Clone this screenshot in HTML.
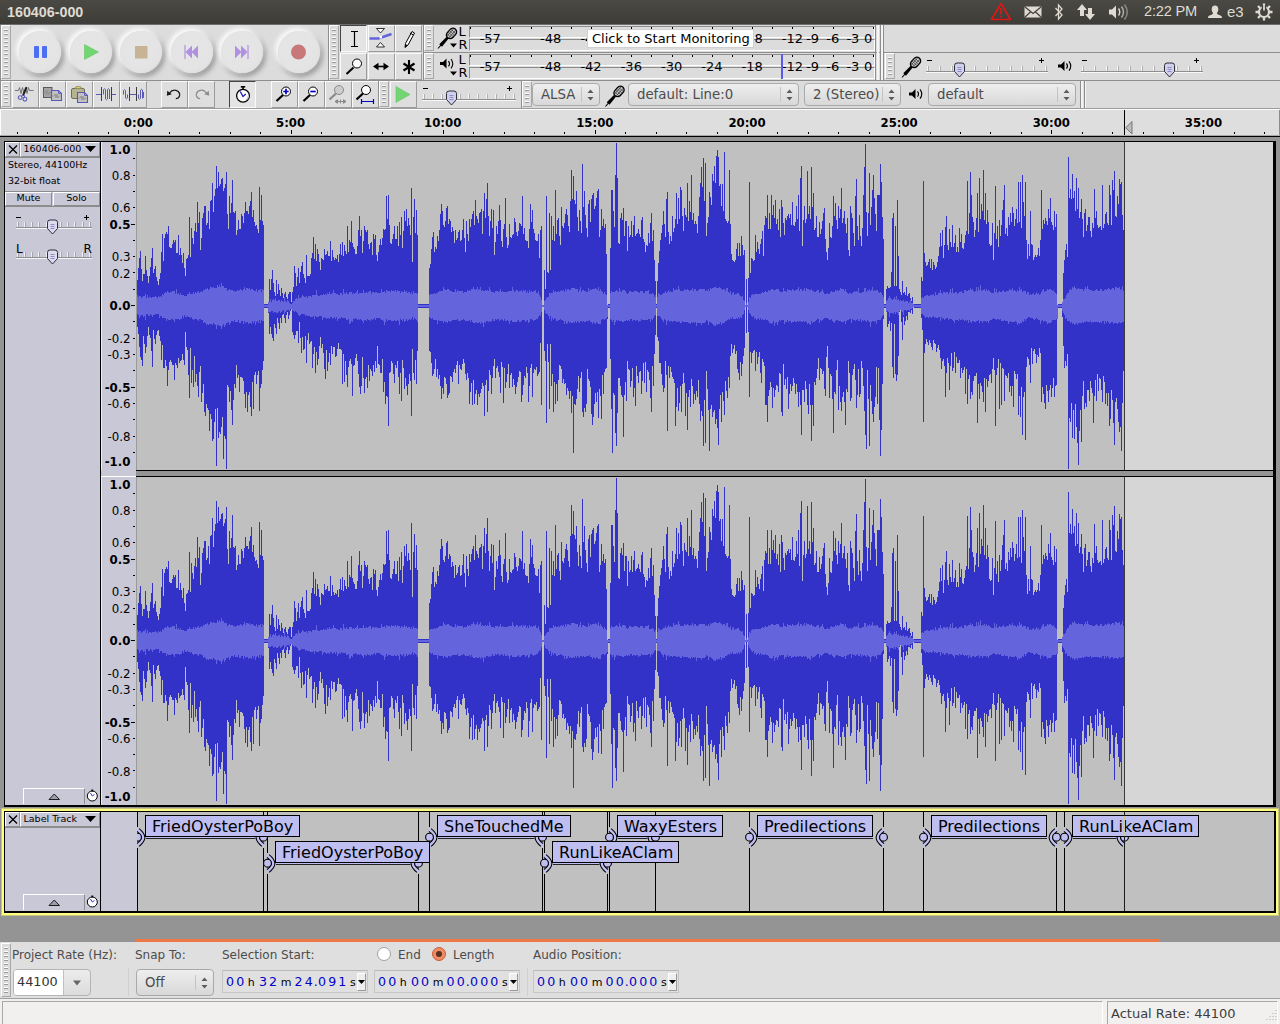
<!DOCTYPE html><html><head><meta charset="utf-8"><title>160406-000</title><style>
*{box-sizing:border-box;margin:0;padding:0}
html,body{width:1280px;height:1024px;overflow:hidden;background:#dcdcdc;font-family:"DejaVu Sans","Liberation Sans",sans-serif;color:#000}
.a{position:absolute}
.t{position:absolute;white-space:nowrap;line-height:1}
#top{left:0;top:0;width:1280px;height:24px;background:linear-gradient(#4a4944,#3d3c38)}
.tb{position:absolute;background:#dcdcdc}.ln{position:absolute;background:#8e8e8e}
.grab{position:absolute;width:10px;background:#dcdcdc;border:1px solid #a8a8a8;border-top-color:#fff;border-left-color:#fff}.grab:after{content:'';position:absolute;left:2px;width:4px;top:3px;bottom:2px;background:repeating-linear-gradient(#fdfdfd 0 1px,#9a9a9a 1px 2px,#dcdcdc 2px 4px)}
.btn{position:absolute;width:27px;height:27px;background:#dedede;border:1px solid #9c9c9c;border-top-color:#fbfbfb;border-left-color:#fbfbfb}
.btn.dn{border-color:#444 #fbfbfb #fbfbfb #444;background:#e4e4e4}
.rb{position:absolute;width:42px;height:42px;border-radius:50%;background:radial-gradient(circle at 46% 44%,#e6e6e6 0,#e4e4e4 60%,#dadada 100%);box-shadow:-2px -2px 4px 1px #fafafa,2px 3px 5px 1px #9c9c9c}
.combo{position:absolute;height:23px;border:1px solid #a9a9a9;border-radius:4px;background:linear-gradient(#eeeeee,#d8d8d8);font-size:13.300px;color:#4c4c4c;line-height:22px;padding-left:8px;white-space:nowrap;overflow:hidden}
.lbl{position:absolute;height:22px;background:#bebef0;border:1px solid #000;font-size:16px;line-height:20px;padding-top:1px;padding-left:6px;white-space:nowrap}
.sel{font-size:12px;color:#4c4c4c}
.dg{position:absolute;top:975px;width:10px;text-align:center;font-size:12.600px;line-height:13px;color:#0000c8}.un{position:absolute;top:975.500px;width:12px;text-align:center;font-size:11px;line-height:13px;color:#000}.tc{position:absolute;height:23px;background:#e4e4e4;border:1px solid #c4c4c4;font-size:15px;line-height:21px;white-space:nowrap;color:#000;padding-left:5px;letter-spacing:2.2px}
.tc b{font-weight:normal;color:#0000c0}
.tc i{font-style:normal;font-size:13px;letter-spacing:0;margin:0 3px 0 1px}
</style></head><body><div class="a" id="top"></div><div class="t" style="left:7px;top:4.500px;font-size:14.300px;font-weight:bold;color:#dfdbd2;font-family:'Liberation Sans','DejaVu Sans',sans-serif">160406-000</div><div class="t" style="left:1144px;top:4px;font-size:14.600px;letter-spacing:-0.2px;color:#dfdbd2;font-family:'Liberation Sans',sans-serif">2:22 PM</div><div class="t" style="left:1227px;top:4px;font-size:15px;color:#dfdbd2;font-family:'Liberation Sans',sans-serif">e3</div><svg class="a" style="left:980px;top:0" width="300" height="24" viewBox="980 0 300 24">
<path d="M1001 3.5L1010.5 19.5H991.5Z" fill="none" stroke="#e01616" stroke-width="1.6" stroke-linejoin="round"/>
<path d="M1001 8v6M1001 15.5v2" stroke="#e01616" stroke-width="1.8"/>
<rect x="1024.500" y="6.500" width="17" height="11" rx="1" fill="#dfdbd2"/>
<path d="M1025 7l8 6.500 8-6.500M1025 17l6-5.500M1041 17l-6-5.500" fill="none" stroke="#3d3c38" stroke-width="1.100"/>
<path d="M1055.500 8l6.500 7-3.500 4v-14l3.500 4-6.500 7" fill="none" stroke="#dfdbd2" stroke-width="1.300"/>
<path d="M1082 4l5 6h-3v6h-4v-6h-3zM1090 20l-5-6h3v-6h4v6h3z" fill="#dfdbd2"/>
<path d="M1109 9.500h3l4-4v13l-4-4h-3z" fill="#dfdbd2"/>
<path d="M1118.500 8.500q2.500 3.500 0 7" fill="none" stroke="#dfdbd2" stroke-width="1.400"/>
<path d="M1121.500 6.500q4 5.500 0 11" fill="none" stroke="#b5b2aa" stroke-width="1.400"/>
<path d="M1124.500 4.500q5.500 7.500 0 15" fill="none" stroke="#8f8c85" stroke-width="1.400"/>
<path d="M1215 5.500c2.200 0 3.300 1.700 3.300 3.800 0 1.600-.6 2.900-1.400 3.700 0 1.200 1.600 1.700 3.600 2.500 1.200.5 1.500 1.200 1.500 2.500h-14c0-1.300.3-2 1.500-2.500 2-.8 3.600-1.300 3.600-2.500-.8-.8-1.400-2.100-1.400-3.700 0-2.100 1.100-3.800 3.300-3.800z" fill="#dfdbd2"/>
<g transform="translate(1264 12)" fill="none" stroke="#dfdbd2"><circle r="5" stroke-width="2.200"/><path d="M0-8.500v3M0 8.500v-3M-8.500 0h3M8.500 0h-3M-6-6l2 2M6-6l-2 2M-6 6l2-2M6 6l-2-2" stroke-width="2.400"/><path d="M0-7v6" stroke="#3d3c38" stroke-width="4.500"/><path d="M0-7.500v6" stroke-width="1.800"/></g>
</svg><div class="tb" style="left:1px;top:24px;width:328px;height:56px"></div><div class="grab" style="left:1px;top:25px;height:54px"></div><div class="rb" style="left:19px;top:31px"></div><div class="rb" style="left:69.5px;top:31px"></div><div class="rb" style="left:120px;top:31px"></div><div class="rb" style="left:170.5px;top:31px"></div><div class="rb" style="left:220.5px;top:31px"></div><div class="rb" style="left:277.5px;top:31px"></div><svg class="a" style="left:0;top:24px" width="330" height="56" viewBox="0 24 330 56">
<rect x="34" y="46" width="5" height="12" rx="1" fill="#4c6ef0"/><rect x="42" y="46" width="5" height="12" rx="1" fill="#4c6ef0"/>
<path d="M84.500 44.500l14 7.500-14 7.500z" fill="#72d572" stroke="#66c466" stroke-width=".6"/>
<rect x="135" y="46" width="12.500" height="12.500" fill="#c8b494"/>
<path d="M185 45v14" stroke="#b090e0" stroke-width="1.200"/><path d="M192 45.500v13l-6.500-6.500zM198 45.500v13l-6.500-6.500z" fill="#b090e0"/>
<path d="M248 45v14" stroke="#b090e0" stroke-width="1.200"/><path d="M235 45.500v13l6.500-6.500zM241 45.500v13l6.500-6.500z" fill="#b090e0"/>
<circle cx="298.500" cy="52" r="7.500" fill="#c87878"/>
</svg><div class="tb" style="left:329px;top:24px;width:95px;height:56px"></div><div class="grab" style="left:329px;top:25px;height:54px"></div><div class="btn dn" style="left:340px;top:25px"></div><div class="btn" style="left:367.5px;top:25px"></div><div class="btn" style="left:395px;top:25px"></div><div class="btn" style="left:340px;top:52.5px"></div><div class="btn" style="left:367.5px;top:52.5px"></div><div class="btn" style="left:395px;top:52.5px"></div><svg class="a" style="left:340px;top:24px" width="84" height="56" viewBox="340 24 84 56">
<path d="M351 31.500h7M351 46.500h7M354.500 31.500v15" stroke="#000" stroke-width="1.200" fill="none"/>
<path d="M369.500 38.500h9l13-4.500" stroke="#6464dc" stroke-width="2.600" fill="none"/><path d="M376.500 28.500h8l-4 4.500zM376.500 47h8l-4-4.500z" fill="#fff" stroke="#000" stroke-width=".8"/><rect x="379.500" y="36" width="2.500" height="2.500" fill="#fff"/>
<path d="M412 31.500l2.500 1.500-6.500 12-3 2.500.5-4z" fill="#fff" stroke="#000" stroke-width="1"/><path d="M405 47.500l.5-3.500 2 1.200z" fill="#000"/><path d="M410 33l3 1.800" stroke="#000" stroke-width="1"/>
<circle cx="357" cy="63.500" r="4.500" fill="#fff" stroke="#000" stroke-width="1"/><path d="M353.500 67.500l-7 6.500" stroke="#000" stroke-width="2"/>
<path d="M375 66.500h12" stroke="#000" stroke-width="1.600"/><path d="M373 66.500l5.500-3.800v7.600zM389 66.500l-5.500-3.800v7.600z" fill="#000"/>
<path d="M409 60v14M403.500 63.500l11 7M414.500 63.500l-11 7" stroke="#000" stroke-width="2.100"/>
</svg><div class="tb" style="left:423px;top:24px;width:454px;height:28px"></div><div class="grab" style="left:424px;top:25px;height:26px"></div><div class="a" style="left:469px;top:26.0px;width:406px;height:12px;background:#dcdcdc;border:1px solid #fff;border-top-color:#8c8c8c;border-left-color:#8c8c8c"></div><div class="a" style="left:469px;top:38.5px;width:406px;height:12px;background:#dcdcdc;border:1px solid #fff;border-top-color:#8c8c8c;border-left-color:#8c8c8c"></div><div class="t" style="left:458.500px;top:25px;font-size:13px">L</div><div class="t" style="left:458.500px;top:38px;font-size:13px">R</div><div class="a" style="left:470px;top:27px;width:1px;height:2px;background:#000"></div><div class="a" style="left:490px;top:27px;width:1px;height:2px;background:#000"></div><div class="a" style="left:510px;top:27px;width:1px;height:2px;background:#000"></div><div class="a" style="left:531px;top:27px;width:1px;height:2px;background:#000"></div><div class="a" style="left:551px;top:27px;width:1px;height:2px;background:#000"></div><div class="a" style="left:571px;top:27px;width:1px;height:2px;background:#000"></div><div class="a" style="left:591px;top:27px;width:1px;height:2px;background:#000"></div><div class="a" style="left:611px;top:27px;width:1px;height:2px;background:#000"></div><div class="a" style="left:631px;top:27px;width:1px;height:2px;background:#000"></div><div class="a" style="left:651px;top:27px;width:1px;height:2px;background:#000"></div><div class="a" style="left:672px;top:27px;width:1px;height:2px;background:#000"></div><div class="a" style="left:692px;top:27px;width:1px;height:2px;background:#000"></div><div class="a" style="left:712px;top:27px;width:1px;height:2px;background:#000"></div><div class="a" style="left:732px;top:27px;width:1px;height:2px;background:#000"></div><div class="a" style="left:752px;top:27px;width:1px;height:2px;background:#000"></div><div class="a" style="left:772px;top:27px;width:1px;height:2px;background:#000"></div><div class="a" style="left:792px;top:27px;width:1px;height:2px;background:#000"></div><div class="a" style="left:813px;top:27px;width:1px;height:2px;background:#000"></div><div class="a" style="left:833px;top:27px;width:1px;height:2px;background:#000"></div><div class="a" style="left:853px;top:27px;width:1px;height:2px;background:#000"></div><div class="a" style="left:873px;top:27px;width:1px;height:2px;background:#000"></div><div class="tb" style="left:423px;top:52px;width:454px;height:28px"></div><div class="grab" style="left:424px;top:53px;height:26px"></div><div class="a" style="left:469px;top:54.0px;width:406px;height:12px;background:#dcdcdc;border:1px solid #fff;border-top-color:#8c8c8c;border-left-color:#8c8c8c"></div><div class="a" style="left:469px;top:66.5px;width:406px;height:12px;background:#dcdcdc;border:1px solid #fff;border-top-color:#8c8c8c;border-left-color:#8c8c8c"></div><div class="t" style="left:458.500px;top:53px;font-size:13px">L</div><div class="t" style="left:458.500px;top:66px;font-size:13px">R</div><div class="a" style="left:470px;top:55px;width:1px;height:2px;background:#000"></div><div class="a" style="left:490px;top:55px;width:1px;height:2px;background:#000"></div><div class="a" style="left:510px;top:55px;width:1px;height:2px;background:#000"></div><div class="a" style="left:531px;top:55px;width:1px;height:2px;background:#000"></div><div class="a" style="left:551px;top:55px;width:1px;height:2px;background:#000"></div><div class="a" style="left:571px;top:55px;width:1px;height:2px;background:#000"></div><div class="a" style="left:591px;top:55px;width:1px;height:2px;background:#000"></div><div class="a" style="left:611px;top:55px;width:1px;height:2px;background:#000"></div><div class="a" style="left:631px;top:55px;width:1px;height:2px;background:#000"></div><div class="a" style="left:651px;top:55px;width:1px;height:2px;background:#000"></div><div class="a" style="left:672px;top:55px;width:1px;height:2px;background:#000"></div><div class="a" style="left:692px;top:55px;width:1px;height:2px;background:#000"></div><div class="a" style="left:712px;top:55px;width:1px;height:2px;background:#000"></div><div class="a" style="left:732px;top:55px;width:1px;height:2px;background:#000"></div><div class="a" style="left:752px;top:55px;width:1px;height:2px;background:#000"></div><div class="a" style="left:772px;top:55px;width:1px;height:2px;background:#000"></div><div class="a" style="left:792px;top:55px;width:1px;height:2px;background:#000"></div><div class="a" style="left:813px;top:55px;width:1px;height:2px;background:#000"></div><div class="a" style="left:833px;top:55px;width:1px;height:2px;background:#000"></div><div class="a" style="left:853px;top:55px;width:1px;height:2px;background:#000"></div><div class="a" style="left:873px;top:55px;width:1px;height:2px;background:#000"></div><div class="t" style="left:460.29499999999996px;width:60px;text-align:center;top:32px;font-size:13px">-57</div><div class="t" style="left:520.73px;width:60px;text-align:center;top:32px;font-size:13px">-48</div><div class="t" style="left:561.02px;width:60px;text-align:center;top:32px;font-size:13px">-42</div><div class="t" style="left:762.47px;width:60px;text-align:center;top:32px;font-size:13px">-12</div><div class="t" style="left:782.615px;width:60px;text-align:center;top:32px;font-size:13px">-9</div><div class="t" style="left:802.76px;width:60px;text-align:center;top:32px;font-size:13px">-6</div><div class="t" style="left:822.905px;width:60px;text-align:center;top:32px;font-size:13px">-3</div><div class="t" style="left:460.29499999999996px;width:60px;text-align:center;top:60px;font-size:13px">-57</div><div class="t" style="left:520.73px;width:60px;text-align:center;top:60px;font-size:13px">-48</div><div class="t" style="left:561.02px;width:60px;text-align:center;top:60px;font-size:13px">-42</div><div class="t" style="left:601.31px;width:60px;text-align:center;top:60px;font-size:13px">-36</div><div class="t" style="left:641.5999999999999px;width:60px;text-align:center;top:60px;font-size:13px">-30</div><div class="t" style="left:681.89px;width:60px;text-align:center;top:60px;font-size:13px">-24</div><div class="t" style="left:722.18px;width:60px;text-align:center;top:60px;font-size:13px">-18</div><div class="t" style="left:762.47px;width:60px;text-align:center;top:60px;font-size:13px">-12</div><div class="t" style="left:782.615px;width:60px;text-align:center;top:60px;font-size:13px">-9</div><div class="t" style="left:802.76px;width:60px;text-align:center;top:60px;font-size:13px">-6</div><div class="t" style="left:822.905px;width:60px;text-align:center;top:60px;font-size:13px">-3</div><div class="t" style="left:864px;top:32px;font-size:13px">0</div><div class="t" style="left:864px;top:60px;font-size:13px">0</div><div class="t" style="left:754.500px;top:32px;font-size:13px">8</div><div class="a" style="left:587px;top:29px;width:167px;height:19px;background:#fff;border:1px solid #d0d0d0"></div><div class="t" style="left:592px;top:32px;font-size:13px">Click to Start Monitoring</div><div class="a" style="left:780.500px;top:54px;width:2px;height:25px;background:#5a5af0"></div><svg class="a" style="left:434px;top:24px" width="26" height="56" viewBox="434 24 26 56">
<g transform="translate(451.0 34.0) rotate(42)"><path d="M-1.300 5l-.5 10.500h3.600l-.5-10.500z" fill="#000"/><path d="M-.5 15v4.500h1v-4.500z" fill="#000"/><rect x="-3.700" y="-6.500" width="7.400" height="11.500" rx="3.600" fill="#c8c8c8" stroke="#000" stroke-width="1.300"/><path d="M-3.500 -3.500h7M-3.700 -1.500h7.400M-3.700 .5h7.400M-3.500 2.500h7M-1.500 -6v10.500M1 -6v10.500" stroke="#222" stroke-width=".6"/></g>
<path d="M450 43.500h7l-3.500 4z" fill="#000"/>
<path d="M440 62h3l3.500-3.500v10l-3.500-3.500h-3z" fill="#000"/><path d="M448.500 61q2 2.700 0 5.400M451 59q3.500 4.700 0 9.400" fill="none" stroke="#000" stroke-width="1.100"/>
<path d="M450 71.500h7l-3.500 4z" fill="#000"/>
</svg><div class="tb" style="left:884px;top:52px;width:397px;height:28px;border-right:none"></div><div class="grab" style="left:885px;top:53px;height:26px"></div><div class="a" style="left:926px;top:71px;width:122px;height:1px;background:#8e8e8e"></div><div class="a" style="left:926px;top:72px;width:122px;height:1px;background:#f8f8f8"></div><div class="a" style="left:927px;top:66px;width:1px;height:5px;background:#f6f6f6"></div><div class="a" style="left:928px;top:66px;width:1px;height:5px;background:#b0b0b0"></div><div class="a" style="left:939px;top:66px;width:1px;height:5px;background:#f6f6f6"></div><div class="a" style="left:940px;top:66px;width:1px;height:5px;background:#b0b0b0"></div><div class="a" style="left:951px;top:66px;width:1px;height:5px;background:#f6f6f6"></div><div class="a" style="left:952px;top:66px;width:1px;height:5px;background:#b0b0b0"></div><div class="a" style="left:962px;top:66px;width:1px;height:5px;background:#f6f6f6"></div><div class="a" style="left:963px;top:66px;width:1px;height:5px;background:#b0b0b0"></div><div class="a" style="left:974px;top:66px;width:1px;height:5px;background:#f6f6f6"></div><div class="a" style="left:975px;top:66px;width:1px;height:5px;background:#b0b0b0"></div><div class="a" style="left:986px;top:66px;width:1px;height:5px;background:#f6f6f6"></div><div class="a" style="left:987px;top:66px;width:1px;height:5px;background:#b0b0b0"></div><div class="a" style="left:998px;top:66px;width:1px;height:5px;background:#f6f6f6"></div><div class="a" style="left:999px;top:66px;width:1px;height:5px;background:#b0b0b0"></div><div class="a" style="left:1010px;top:66px;width:1px;height:5px;background:#f6f6f6"></div><div class="a" style="left:1011px;top:66px;width:1px;height:5px;background:#b0b0b0"></div><div class="a" style="left:1021px;top:66px;width:1px;height:5px;background:#f6f6f6"></div><div class="a" style="left:1022px;top:66px;width:1px;height:5px;background:#b0b0b0"></div><div class="a" style="left:1033px;top:66px;width:1px;height:5px;background:#f6f6f6"></div><div class="a" style="left:1034px;top:66px;width:1px;height:5px;background:#b0b0b0"></div><div class="a" style="left:1045px;top:66px;width:1px;height:5px;background:#f6f6f6"></div><div class="a" style="left:1046px;top:66px;width:1px;height:5px;background:#b0b0b0"></div><svg class="a" style="left:952.5px;top:62px" width="13" height="17" viewBox="0 0 13 17"><path d="M1.500 3.500q0-2.500 2.500-2.500h5q2.500 0 2.500 2.500v6l-5 5.500-5-5.500z" fill="#d0d0ea" stroke="#2c2c3c" stroke-width="1"/><path d="M4.500 5.500h4M4.500 7.500h4M4.500 9.500h4" stroke="#8c8cc8" stroke-width="1"/></svg><div class="a" style="left:927px;top:60px;width:5px;height:1px;background:#000"></div><div class="a" style="left:1039px;top:60px;width:5px;height:1px;background:#000"></div><div class="a" style="left:1041px;top:58px;width:1px;height:5px;background:#000"></div><div class="a" style="left:1081px;top:71px;width:122px;height:1px;background:#8e8e8e"></div><div class="a" style="left:1081px;top:72px;width:122px;height:1px;background:#f8f8f8"></div><div class="a" style="left:1082px;top:66px;width:1px;height:5px;background:#f6f6f6"></div><div class="a" style="left:1083px;top:66px;width:1px;height:5px;background:#b0b0b0"></div><div class="a" style="left:1094px;top:66px;width:1px;height:5px;background:#f6f6f6"></div><div class="a" style="left:1095px;top:66px;width:1px;height:5px;background:#b0b0b0"></div><div class="a" style="left:1106px;top:66px;width:1px;height:5px;background:#f6f6f6"></div><div class="a" style="left:1107px;top:66px;width:1px;height:5px;background:#b0b0b0"></div><div class="a" style="left:1117px;top:66px;width:1px;height:5px;background:#f6f6f6"></div><div class="a" style="left:1118px;top:66px;width:1px;height:5px;background:#b0b0b0"></div><div class="a" style="left:1129px;top:66px;width:1px;height:5px;background:#f6f6f6"></div><div class="a" style="left:1130px;top:66px;width:1px;height:5px;background:#b0b0b0"></div><div class="a" style="left:1141px;top:66px;width:1px;height:5px;background:#f6f6f6"></div><div class="a" style="left:1142px;top:66px;width:1px;height:5px;background:#b0b0b0"></div><div class="a" style="left:1153px;top:66px;width:1px;height:5px;background:#f6f6f6"></div><div class="a" style="left:1154px;top:66px;width:1px;height:5px;background:#b0b0b0"></div><div class="a" style="left:1165px;top:66px;width:1px;height:5px;background:#f6f6f6"></div><div class="a" style="left:1166px;top:66px;width:1px;height:5px;background:#b0b0b0"></div><div class="a" style="left:1176px;top:66px;width:1px;height:5px;background:#f6f6f6"></div><div class="a" style="left:1177px;top:66px;width:1px;height:5px;background:#b0b0b0"></div><div class="a" style="left:1188px;top:66px;width:1px;height:5px;background:#f6f6f6"></div><div class="a" style="left:1189px;top:66px;width:1px;height:5px;background:#b0b0b0"></div><div class="a" style="left:1200px;top:66px;width:1px;height:5px;background:#f6f6f6"></div><div class="a" style="left:1201px;top:66px;width:1px;height:5px;background:#b0b0b0"></div><svg class="a" style="left:1163.0px;top:62px" width="13" height="17" viewBox="0 0 13 17"><path d="M1.500 3.500q0-2.500 2.500-2.500h5q2.500 0 2.500 2.500v6l-5 5.500-5-5.500z" fill="#d0d0ea" stroke="#2c2c3c" stroke-width="1"/><path d="M4.500 5.500h4M4.500 7.500h4M4.500 9.500h4" stroke="#8c8cc8" stroke-width="1"/></svg><div class="a" style="left:1082px;top:60px;width:5px;height:1px;background:#000"></div><div class="a" style="left:1194px;top:60px;width:5px;height:1px;background:#000"></div><div class="a" style="left:1196px;top:58px;width:1px;height:5px;background:#000"></div><svg class="a" style="left:896px;top:54px" width="180" height="26" viewBox="896 54 180 26">
<g transform="translate(915.0 63.0) rotate(42)"><path d="M-1.300 5l-.5 10.500h3.600l-.5-10.500z" fill="#000"/><path d="M-.5 15v4.500h1v-4.500z" fill="#000"/><rect x="-3.700" y="-6.500" width="7.400" height="11.500" rx="3.600" fill="#c8c8c8" stroke="#000" stroke-width="1.300"/><path d="M-3.500 -3.500h7M-3.700 -1.500h7.400M-3.700 .5h7.400M-3.500 2.500h7M-1.500 -6v10.500M1 -6v10.500" stroke="#222" stroke-width=".6"/></g>
<path d="M1058 64.500h3l3.500-3.500v10l-3.500-3.500h-3z" fill="#000"/><path d="M1066.500 63.300q2 2.700 0 5.400M1069 61.300q3.500 4.700 0 9.400" fill="none" stroke="#000" stroke-width="1.100"/>
</svg><div class="tb" style="left:1px;top:80px;width:379px;height:28px"></div><div class="grab" style="left:1px;top:81px;height:26px"></div><div class="btn" style="left:11.5px;top:81px"></div><div class="btn" style="left:38.5px;top:81px"></div><div class="btn" style="left:65.5px;top:81px"></div><div class="btn" style="left:92.5px;top:81px"></div><div class="btn" style="left:119.5px;top:81px"></div><div class="btn" style="left:161px;top:81px"></div><div class="btn" style="left:188px;top:81px"></div><div class="btn dn" style="left:229px;top:81px"></div><div class="btn" style="left:271px;top:81px"></div><div class="btn" style="left:298px;top:81px"></div><div class="btn" style="left:325px;top:81px"></div><div class="btn" style="left:352px;top:81px"></div><svg class="a" style="left:0;top:80px" width="380" height="28" viewBox="0 80 380 28">
<path d="M15 90.500H18.500L19.500 87.500L21 93.500L22.500 87.500L24 93.500L25.500 87.500L27 93.500L28.500 87.500L29.500 90.500H33.500" stroke="#6a6a6a" stroke-width=".9" fill="none"/><path d="M26.600 87.200L23 95.500" stroke="#1c1c1c" stroke-width="1.900"/><path d="M23.200 94.500L21.300 96.200M24 95L24.600 97.200" stroke="#5a5ab4" stroke-width="1"/><circle cx="20.200" cy="97.600" r="1.900" fill="none" stroke="#5a5ab4" stroke-width="1.100"/><circle cx="24.900" cy="99.200" r="1.900" fill="none" stroke="#5a5ab4" stroke-width="1.100"/>
<rect x="43.500" y="87.500" width="8.500" height="10" fill="#a4a4a4" stroke="#5a5a5a" stroke-width="1"/><path d="M42.500 92.500h2l1-2 1 4 1-4 1 4 1-2h1.500" stroke="#8a8a8a" stroke-width=".8" fill="none"/><path d="M51.500 90.500H58.500L61.500 93.500V100.500H51.500Z" fill="#c2c2c2" stroke="#5a5ab4" stroke-width="1.100"/><path d="M58.500 90.500V93.500H61.500" fill="none" stroke="#5a5ab4" stroke-width=".9"/><path d="M52.500 96h1.500l1-2 1 4 1-4 1 4 1-2h1.500" stroke="#8a8a8a" stroke-width=".8" fill="none"/>
<rect x="71.500" y="88.500" width="13" height="10" rx="1.500" fill="#b6b48e" stroke="#6e6e5e" stroke-width="1"/><path d="M75 88.500q0-2 2-2h2.500q2 0 2 2z" fill="#d8cc6c" stroke="#8a8860" stroke-width=".8"/><path d="M77.500 92.500H84.500L87.500 95.500V102.500H77.500Z" fill="#c2c2c2" stroke="#5a5ab4" stroke-width="1.100"/><path d="M84.500 92.500V95.500H87.500" fill="none" stroke="#5a5ab4" stroke-width=".9"/><path d="M78.500 98h1.500l1-2 1 4 1-4 1 4 1-2h1.500" stroke="#8a8a8a" stroke-width=".8" fill="none"/>
<g shape-rendering="crispEdges" fill="none"><path d="M96 94.500H101M112 94.500H116" stroke="#5a5ab4" stroke-width="1"/><path d="M101.500 87V101M111.500 87V101" stroke="#3c3c3c" stroke-width="1"/></g><path d="M103.500 94.500V89.500Q104.500 88 105.500 89.500V99Q106.500 100.500 107.500 99V89.500Q108.500 88 109.500 89.500V99" stroke="#5a5ab4" stroke-width="1" fill="none"/>
<g shape-rendering="crispEdges" fill="none"><path d="M130 94.500H137" stroke="#5a5ab4" stroke-width="1"/><path d="M129.500 87V101M136.500 87V101" stroke="#3c3c3c" stroke-width="1"/></g><path d="M123.500 94.500V90.500Q124.500 89 125.500 90.500V98Q126.500 99.500 127.500 98V94.500M138.500 94.500V98.500Q139.500 100 140.500 98.500V90Q141.500 88.500 142.500 90V98Q143 99 143.500 97.500V92" stroke="#5a5ab4" stroke-width="1" fill="none"/>
<path d="M166.800 95.800L167.300 90.800L171.800 94.200Z" fill="#1c1c1c"/><path d="M169.500 93Q172 89.300 176 90.300Q180.500 92 179.500 96Q178.500 98.700 175.800 98.600" stroke="#1c1c1c" stroke-width="1.300" fill="none"/>
<path d="M209.200 95.800L208.700 90.800L204.200 94.200Z" fill="#8c8c8c"/><path d="M206.500 93Q204 89.300 200 90.300Q195.500 92 196.500 96Q197.500 98.700 200.200 98.600" stroke="#8c8c8c" stroke-width="1.300" fill="none"/>
<circle cx="243" cy="95.700" r="6.400" fill="#fff" stroke="#000" stroke-width="1.300"/><path d="M246 100q2.500-2 2.500-4.500" stroke="#c8c8c8" stroke-width="1.500" fill="none"/><path d="M240.800 86.800h4.400" stroke="#000" stroke-width="1.600"/><path d="M243 87v2.500" stroke="#000" stroke-width="1.600"/><path d="M240.300 91.500L243 96.500L245.800 94" stroke="#1818c0" stroke-width="1.300" fill="none"/>
<circle cx="286" cy="91.500" r="4.500" fill="#fff" stroke="#000" stroke-width="1"/><path d="M283 95l-6.500 6" stroke="#000" stroke-width="2.200"/><path d="M283.300 91.500h5.400M286 88.800v5.400" stroke="#0000c0" stroke-width="1.700"/>
<circle cx="313" cy="91.500" r="4.500" fill="#fff" stroke="#000" stroke-width="1"/><path d="M310 95l-6.500 6" stroke="#000" stroke-width="2.200"/><path d="M310.300 91.500h5.400" stroke="#0000c0" stroke-width="1.700"/>
<circle cx="339" cy="90" r="4.500" fill="#cdcdcd" stroke="#8a8a8a" stroke-width="1"/><path d="M336 93.500l-6.500 6" stroke="#8a8a8a" stroke-width="2.200"/><path d="M335 101.500h11M335 101.500l2.500-1.800v3.600zM346 101.500l-2.500-1.800v3.600zM340.500 99.500v4" stroke="#8a8a8a" stroke-width="1" fill="#8a8a8a"/>
<circle cx="366" cy="90" r="4.500" fill="#fff" stroke="#000" stroke-width="1"/><path d="M363 93.500l-6.500 6" stroke="#000" stroke-width="2.200"/><path d="M361.500 101.500h12M361.500 99v5M373.500 99v5" stroke="#0000c0" stroke-width="1.200" fill="none"/>
</svg><div class="tb" style="left:379px;top:80px;width:143px;height:28px"></div><div class="grab" style="left:379px;top:81px;height:26px"></div><div class="btn" style="left:389.500px;top:81px"></div><svg class="a" style="left:389px;top:81px" width="28" height="27" viewBox="0 0 28 27"><path d="M7 5.500l14 8-14 8z" fill="#72d572" stroke="#66c466" stroke-width=".6"/></svg><div class="a" style="left:422px;top:99px;width:94px;height:1px;background:#8e8e8e"></div><div class="a" style="left:422px;top:100px;width:94px;height:1px;background:#f8f8f8"></div><div class="a" style="left:423px;top:94px;width:1px;height:5px;background:#f6f6f6"></div><div class="a" style="left:424px;top:94px;width:1px;height:5px;background:#b0b0b0"></div><div class="a" style="left:432px;top:94px;width:1px;height:5px;background:#f6f6f6"></div><div class="a" style="left:433px;top:94px;width:1px;height:5px;background:#b0b0b0"></div><div class="a" style="left:441px;top:94px;width:1px;height:5px;background:#f6f6f6"></div><div class="a" style="left:442px;top:94px;width:1px;height:5px;background:#b0b0b0"></div><div class="a" style="left:450px;top:94px;width:1px;height:5px;background:#f6f6f6"></div><div class="a" style="left:451px;top:94px;width:1px;height:5px;background:#b0b0b0"></div><div class="a" style="left:459px;top:94px;width:1px;height:5px;background:#f6f6f6"></div><div class="a" style="left:460px;top:94px;width:1px;height:5px;background:#b0b0b0"></div><div class="a" style="left:468px;top:94px;width:1px;height:5px;background:#f6f6f6"></div><div class="a" style="left:469px;top:94px;width:1px;height:5px;background:#b0b0b0"></div><div class="a" style="left:477px;top:94px;width:1px;height:5px;background:#f6f6f6"></div><div class="a" style="left:478px;top:94px;width:1px;height:5px;background:#b0b0b0"></div><div class="a" style="left:486px;top:94px;width:1px;height:5px;background:#f6f6f6"></div><div class="a" style="left:487px;top:94px;width:1px;height:5px;background:#b0b0b0"></div><div class="a" style="left:495px;top:94px;width:1px;height:5px;background:#f6f6f6"></div><div class="a" style="left:496px;top:94px;width:1px;height:5px;background:#b0b0b0"></div><div class="a" style="left:504px;top:94px;width:1px;height:5px;background:#f6f6f6"></div><div class="a" style="left:505px;top:94px;width:1px;height:5px;background:#b0b0b0"></div><div class="a" style="left:513px;top:94px;width:1px;height:5px;background:#f6f6f6"></div><div class="a" style="left:514px;top:94px;width:1px;height:5px;background:#b0b0b0"></div><svg class="a" style="left:444.5px;top:90px" width="13" height="17" viewBox="0 0 13 17"><path d="M1.500 3.500q0-2.500 2.500-2.500h5q2.500 0 2.500 2.500v6l-5 5.500-5-5.500z" fill="#d0d0ea" stroke="#2c2c3c" stroke-width="1"/><path d="M4.500 5.500h4M4.500 7.500h4M4.500 9.500h4" stroke="#8c8cc8" stroke-width="1"/></svg><div class="a" style="left:423px;top:88px;width:5px;height:1px;background:#000"></div><div class="a" style="left:507px;top:88px;width:5px;height:1px;background:#000"></div><div class="a" style="left:509px;top:86px;width:1px;height:5px;background:#000"></div><div class="tb" style="left:522px;top:80px;width:559px;height:28px"></div><div class="grab" style="left:522px;top:81px;height:26px"></div><div class="combo" style="left:532px;top:83px;width:68px;height:23px;line-height:22px">ALSA</div><div class="a" style="left:581px;top:87.0px;width:1px;height:15px;background:#c4c4c4"></div><svg class="a" style="left:586px;top:88.0px" width="9" height="14" viewBox="0 0 9 14"><path d="M1.500 5l3-3.500 3 3.500zM1.500 9l3 3.500 3-3.500z" fill="#5a5a5a"/></svg><div class="combo" style="left:628px;top:83px;width:171px;height:23px;line-height:22px">default: Line:0</div><div class="a" style="left:780px;top:87.0px;width:1px;height:15px;background:#c4c4c4"></div><svg class="a" style="left:785px;top:88.0px" width="9" height="14" viewBox="0 0 9 14"><path d="M1.500 5l3-3.500 3 3.500zM1.500 9l3 3.500 3-3.500z" fill="#5a5a5a"/></svg><div class="combo" style="left:804px;top:83px;width:97px;height:23px;line-height:22px">2 (Stereo)</div><div class="a" style="left:882px;top:87.0px;width:1px;height:15px;background:#c4c4c4"></div><svg class="a" style="left:887px;top:88.0px" width="9" height="14" viewBox="0 0 9 14"><path d="M1.500 5l3-3.500 3 3.500zM1.500 9l3 3.500 3-3.500z" fill="#5a5a5a"/></svg><div class="combo" style="left:928px;top:83px;width:148px;height:23px;line-height:22px">default</div><div class="a" style="left:1057px;top:87.0px;width:1px;height:15px;background:#c4c4c4"></div><svg class="a" style="left:1062px;top:88.0px" width="9" height="14" viewBox="0 0 9 14"><path d="M1.500 5l3-3.500 3 3.500zM1.500 9l3 3.500 3-3.500z" fill="#5a5a5a"/></svg><svg class="a" style="left:604px;top:81px" width="320" height="27" viewBox="604 81 320 27">
<g transform="translate(618.5 92.0) rotate(42)"><path d="M-1.300 5l-.5 10.500h3.600l-.5-10.500z" fill="#000"/><path d="M-.5 15v4.500h1v-4.500z" fill="#000"/><rect x="-3.700" y="-6.500" width="7.400" height="11.500" rx="3.600" fill="#c8c8c8" stroke="#000" stroke-width="1.300"/><path d="M-3.500 -3.500h7M-3.700 -1.500h7.400M-3.700 .5h7.400M-3.500 2.500h7M-1.500 -6v10.500M1 -6v10.500" stroke="#222" stroke-width=".6"/></g>
<path d="M909 92.500h3l3.500-3.500v10l-3.500-3.500h-3z" fill="#000"/><path d="M917.500 91.300q2 2.700 0 5.400M920 89.300q3.500 4.700 0 9.400" fill="none" stroke="#000" stroke-width="1.100"/>
</svg><div class="ln" style="left:0px;top:24px;width:1280px;height:1px;background:#6e6d6a"></div><div class="ln" style="left:423px;top:52px;width:857px;height:1px;background:#8e8e8e"></div><div class="ln" style="left:0px;top:80px;width:1280px;height:1px;background:#8e8e8e"></div><div class="ln" style="left:0px;top:25px;width:1px;height:83px;background:#8e8e8e"></div><div class="ln" style="left:328px;top:25px;width:1px;height:55px;background:#8e8e8e"></div><div class="ln" style="left:423px;top:25px;width:1px;height:55px;background:#8e8e8e"></div><div class="ln" style="left:875px;top:25px;width:1px;height:55px;background:#8e8e8e"></div><div class="ln" style="left:880px;top:25px;width:1px;height:55px;background:#8e8e8e"></div><div class="ln" style="left:883px;top:25px;width:1px;height:55px;background:#8e8e8e"></div><div class="ln" style="left:877px;top:25px;width:1px;height:55px;background:#f4f4f4"></div><div class="ln" style="left:878px;top:25px;width:1px;height:55px;background:#f4f4f4"></div><div class="ln" style="left:881px;top:25px;width:1px;height:55px;background:#f4f4f4"></div><div class="ln" style="left:882px;top:25px;width:1px;height:55px;background:#f4f4f4"></div><div class="ln" style="left:378px;top:81px;width:1px;height:27px;background:#8e8e8e"></div><div class="ln" style="left:521px;top:81px;width:1px;height:27px;background:#8e8e8e"></div><div class="ln" style="left:1080px;top:81px;width:1px;height:27px;background:#8e8e8e"></div><div class="ln" style="left:1084px;top:81px;width:1px;height:27px;background:#8e8e8e"></div><div class="ln" style="left:1081px;top:81px;width:1px;height:27px;background:#f4f4f4"></div><div class="ln" style="left:1082px;top:81px;width:1px;height:27px;background:#f4f4f4"></div><div class="ln" style="left:1085px;top:81px;width:1px;height:27px;background:#f4f4f4"></div><div class="a" style="left:0;top:108px;width:1280px;height:1px;background:#9c9c9c"></div><div class="a" style="left:0;top:109px;width:1280px;height:1px;background:#fdfdfd"></div><div class="a" style="left:1px;top:110px;width:1278px;height:25px;background:#dedede"></div><div class="a" style="left:0;top:135px;width:1280px;height:1px;background:#a8a8a8"></div><div class="a" style="left:0;top:136px;width:1280px;height:1px;background:#000"></div><div class="a" style="left:0;top:110px;width:1px;height:25px;background:#fdfdfd"></div><div class="a" style="left:1279px;top:110px;width:1px;height:25px;background:#8c8c8c"></div><div class="a" style="left:17px;top:132px;width:1px;height:2px;background:#000"></div><div class="a" style="left:47px;top:132px;width:1px;height:2px;background:#000"></div><div class="a" style="left:78px;top:132px;width:1px;height:2px;background:#000"></div><div class="a" style="left:108px;top:132px;width:1px;height:2px;background:#000"></div><div class="a" style="left:138px;top:130px;width:1px;height:4px;background:#000"></div><div class="a" style="left:169px;top:132px;width:1px;height:2px;background:#000"></div><div class="a" style="left:199px;top:132px;width:1px;height:2px;background:#000"></div><div class="a" style="left:230px;top:132px;width:1px;height:2px;background:#000"></div><div class="a" style="left:260px;top:132px;width:1px;height:2px;background:#000"></div><div class="a" style="left:291px;top:130px;width:1px;height:4px;background:#000"></div><div class="a" style="left:321px;top:132px;width:1px;height:2px;background:#000"></div><div class="a" style="left:351px;top:132px;width:1px;height:2px;background:#000"></div><div class="a" style="left:382px;top:132px;width:1px;height:2px;background:#000"></div><div class="a" style="left:412px;top:132px;width:1px;height:2px;background:#000"></div><div class="a" style="left:443px;top:130px;width:1px;height:4px;background:#000"></div><div class="a" style="left:473px;top:132px;width:1px;height:2px;background:#000"></div><div class="a" style="left:504px;top:132px;width:1px;height:2px;background:#000"></div><div class="a" style="left:534px;top:132px;width:1px;height:2px;background:#000"></div><div class="a" style="left:564px;top:132px;width:1px;height:2px;background:#000"></div><div class="a" style="left:595px;top:130px;width:1px;height:4px;background:#000"></div><div class="a" style="left:625px;top:132px;width:1px;height:2px;background:#000"></div><div class="a" style="left:656px;top:132px;width:1px;height:2px;background:#000"></div><div class="a" style="left:686px;top:132px;width:1px;height:2px;background:#000"></div><div class="a" style="left:717px;top:132px;width:1px;height:2px;background:#000"></div><div class="a" style="left:747px;top:130px;width:1px;height:4px;background:#000"></div><div class="a" style="left:777px;top:132px;width:1px;height:2px;background:#000"></div><div class="a" style="left:808px;top:132px;width:1px;height:2px;background:#000"></div><div class="a" style="left:838px;top:132px;width:1px;height:2px;background:#000"></div><div class="a" style="left:869px;top:132px;width:1px;height:2px;background:#000"></div><div class="a" style="left:899px;top:130px;width:1px;height:4px;background:#000"></div><div class="a" style="left:930px;top:132px;width:1px;height:2px;background:#000"></div><div class="a" style="left:960px;top:132px;width:1px;height:2px;background:#000"></div><div class="a" style="left:990px;top:132px;width:1px;height:2px;background:#000"></div><div class="a" style="left:1021px;top:132px;width:1px;height:2px;background:#000"></div><div class="a" style="left:1051px;top:130px;width:1px;height:4px;background:#000"></div><div class="a" style="left:1082px;top:132px;width:1px;height:2px;background:#000"></div><div class="a" style="left:1112px;top:132px;width:1px;height:2px;background:#000"></div><div class="a" style="left:1143px;top:132px;width:1px;height:2px;background:#000"></div><div class="a" style="left:1173px;top:132px;width:1px;height:2px;background:#000"></div><div class="a" style="left:1203px;top:130px;width:1px;height:4px;background:#000"></div><div class="a" style="left:1234px;top:132px;width:1px;height:2px;background:#000"></div><div class="a" style="left:1264px;top:132px;width:1px;height:2px;background:#000"></div><div class="t" style="left:108.4px;width:60px;text-align:center;top:118px;font-size:11.700px;font-weight:bold">0:00</div><div class="t" style="left:260.55px;width:60px;text-align:center;top:118px;font-size:11.700px;font-weight:bold">5:00</div><div class="t" style="left:412.70000000000005px;width:60px;text-align:center;top:118px;font-size:11.700px;font-weight:bold">10:00</div><div class="t" style="left:564.85px;width:60px;text-align:center;top:118px;font-size:11.700px;font-weight:bold">15:00</div><div class="t" style="left:717.0px;width:60px;text-align:center;top:118px;font-size:11.700px;font-weight:bold">20:00</div><div class="t" style="left:869.15px;width:60px;text-align:center;top:118px;font-size:11.700px;font-weight:bold">25:00</div><div class="t" style="left:1021.3px;width:60px;text-align:center;top:118px;font-size:11.700px;font-weight:bold">30:00</div><div class="t" style="left:1173.45px;width:60px;text-align:center;top:118px;font-size:11.700px;font-weight:bold">35:00</div><div class="a" style="left:1124px;top:110px;width:1px;height:25px;background:#000"></div><svg class="a" style="left:1125px;top:120px" width="9" height="15" viewBox="0 0 9 15"><path d="M7 1.500v12.500l-6.300-6.250z" fill="#bcbcbc" stroke="#767676" stroke-width="1"/></svg><div class="a" style="left:0;top:137px;width:1280px;height:805px;background:#949494"></div><div class="a" style="left:4px;top:141px;width:1272px;height:666px;background:#000"></div><div class="a" style="left:5px;top:142px;width:95px;height:663px;background:#c8c8d7"></div><div class="a" style="left:101px;top:142px;width:35px;height:663px;background:#c8c8d7"></div><div class="a" style="left:136px;top:142px;width:1px;height:663px;background:#9a9a9a"></div><div class="a" style="left:101px;top:142px;width:1px;height:663px;background:#ececf4"></div><div class="a" style="left:101px;top:812px;width:1px;height:99px;background:#ececf4"></div><div class="a" style="left:137px;top:142px;width:988px;height:328px;background:#c0c0c0"></div><div class="a" style="left:1125px;top:142px;width:148px;height:328px;background:#d6d6d6"></div><div class="a" style="left:137px;top:477px;width:988px;height:328px;background:#c0c0c0"></div><div class="a" style="left:1125px;top:477px;width:148px;height:328px;background:#d6d6d6"></div><div class="a" style="left:101px;top:470px;width:1172px;height:7px;background:#949494"></div><div class="a" style="left:136px;top:470px;width:1137px;height:1px;background:#000"></div><div class="a" style="left:136px;top:476px;width:1137px;height:1px;background:#000"></div><div class="a" style="left:101px;top:470px;width:35px;height:6px;background:#c8c8d7"></div><div class="a" style="left:101px;top:476px;width:35px;height:1px;background:#fff"></div><svg class="a" style="left:0;top:0" width="1280" height="1024" viewBox="0 0 1280 1024" shape-rendering="crispEdges"><path d="M137.5 280V327M138.5 268V334M139.5 258V347M140.5 251V357M141.5 269V360M142.5 281V366M143.5 274V336M144.5 274V344M145.5 256V353M146.5 270V347M147.5 276V336M148.5 283V327M149.5 276V335M150.5 267V338M151.5 258V351M152.5 248V367M153.5 273V330M154.5 269V339M155.5 266V344M156.5 277V335M157.5 281V331M158.5 285V330M159.5 279V336M160.5 273V341M161.5 252V360M162.5 234V345M163.5 261V368M164.5 238V368M165.5 234V360M166.5 232V366M167.5 234V386M168.5 226V370M169.5 247V362M170.5 248V360M171.5 248V362M172.5 244V365M173.5 240V365M174.5 242V380M175.5 240V363M176.5 253V365M177.5 253V368M178.5 235V358M179.5 255V363M180.5 248V361M181.5 255V360M182.5 263V354M183.5 253V360M184.5 268V365M185.5 276V332M186.5 259V347M187.5 258V350M188.5 255V375M189.5 217V398M190.5 257V348M191.5 228V383M192.5 238V370M193.5 244V387M194.5 231V356M195.5 223V382M196.5 232V374M197.5 202V386M198.5 223V397M199.5 212V372M200.5 250V366M201.5 238V402M202.5 218V393M203.5 213V384M204.5 206V412M205.5 206V416M206.5 225V404M207.5 223V408M208.5 211V410M209.5 229V431M210.5 201V414M211.5 200V419M212.5 183V441M213.5 212V439M214.5 196V422M215.5 189V409M216.5 166V466M217.5 188V408M218.5 172V438M219.5 186V432M220.5 184V434M221.5 179V427M222.5 178V417M223.5 191V459M224.5 188V436M225.5 184V439M226.5 172V469M227.5 214V385M228.5 229V387M229.5 196V402M230.5 213V391M231.5 203V410M232.5 180V425M233.5 212V400M234.5 213V384M235.5 211V388M236.5 235V365M237.5 230V378M238.5 220V375M239.5 229V392M240.5 229V377M241.5 214V377M242.5 216V378M243.5 223V381M244.5 213V394M245.5 202V408M246.5 211V392M247.5 211V412M248.5 214V395M249.5 206V392M250.5 201V407M251.5 192V416M252.5 217V382M253.5 210V409M254.5 222V375M255.5 226V372M256.5 225V384M257.5 229V375M258.5 233V371M259.5 187V411M260.5 220V388M261.5 195V384M262.5 221V370M263.5 225V361M264.5 304V308M265.5 304V308M266.5 304V308M267.5 304V308M268.5 302V313M269.5 279V334M270.5 290V327M271.5 279V334M272.5 270V338M273.5 283V341M274.5 292V324M275.5 296V328M276.5 280V334M277.5 294V318M278.5 284V323M279.5 290V329M280.5 296V318M281.5 288V323M282.5 293V315M283.5 298V314M284.5 294V318M285.5 292V323M286.5 297V315M287.5 299V312M288.5 294V319M289.5 292V315M290.5 292V311M291.5 302V309M292.5 292V332M293.5 287V335M294.5 266V339M295.5 273V335M296.5 286V331M297.5 277V331M298.5 268V343M299.5 283V322M300.5 272V338M301.5 266V353M302.5 262V337M303.5 274V350M304.5 278V349M305.5 283V336M306.5 255V363M307.5 276V340M308.5 276V333M309.5 276V344M310.5 274V342M311.5 258V341M312.5 253V368M313.5 237V354M314.5 259V347M315.5 244V373M316.5 261V352M317.5 249V365M318.5 254V359M319.5 262V346M320.5 270V337M321.5 258V348M322.5 259V344M323.5 260V353M324.5 249V369M325.5 255V379M326.5 254V350M327.5 251V371M328.5 256V362M329.5 256V353M330.5 241V365M331.5 261V346M332.5 250V354M333.5 257V347M334.5 260V347M335.5 258V357M336.5 259V356M337.5 255V349M338.5 262V343M339.5 254V349M340.5 244V349M341.5 255V350M342.5 242V384M343.5 256V354M344.5 245V382M345.5 251V361M346.5 254V375M347.5 226V387M348.5 252V367M349.5 240V361M350.5 242V359M351.5 221V364M352.5 243V396M353.5 247V366M354.5 249V365M355.5 254V358M356.5 254V354M357.5 246V361M358.5 230V374M359.5 216V387M360.5 236V394M361.5 230V386M362.5 253V357M363.5 241V378M364.5 226V393M365.5 230V379M366.5 232V377M367.5 230V388M368.5 244V365M369.5 249V381M370.5 243V369M371.5 242V371M372.5 255V376M373.5 234V365M374.5 239V372M375.5 235V361M376.5 255V368M377.5 261V346M378.5 252V364M379.5 245V365M380.5 239V373M381.5 245V373M382.5 238V359M383.5 229V392M384.5 230V382M385.5 229V404M386.5 196V396M387.5 219V397M388.5 195V426M389.5 225V373M390.5 243V372M391.5 244V361M392.5 239V363M393.5 234V374M394.5 226V383M395.5 239V365M396.5 239V368M397.5 226V361M398.5 246V377M399.5 222V394M400.5 235V373M401.5 217V401M402.5 248V360M403.5 231V368M404.5 211V389M405.5 221V378M406.5 209V386M407.5 226V395M408.5 218V384M409.5 225V374M410.5 235V381M411.5 188V416M412.5 262V349M413.5 217V373M414.5 199V380M415.5 233V360M416.5 210V384M417.5 235V351M418.5 304V308M419.5 304V308M420.5 304V308M421.5 304V308M422.5 304V308M423.5 304V308M424.5 304V308M425.5 304V308M426.5 304V308M427.5 304V308M428.5 304V308M429.5 268V351M430.5 264V352M431.5 249V363M432.5 237V376M433.5 232V374M434.5 252V369M435.5 247V359M436.5 249V377M437.5 236V369M438.5 241V379M439.5 230V375M440.5 214V386M441.5 204V399M442.5 211V388M443.5 225V394M444.5 227V377M445.5 221V378M446.5 208V384M447.5 206V398M448.5 224V395M449.5 219V393M450.5 221V376M451.5 232V377M452.5 227V382M453.5 231V372M454.5 243V369M455.5 230V373M456.5 240V365M457.5 238V361M458.5 232V384M459.5 230V365M460.5 241V369M461.5 240V370M462.5 230V364M463.5 219V359M464.5 238V363M465.5 252V374M466.5 221V380M467.5 234V373M468.5 241V378M469.5 219V404M470.5 227V392M471.5 219V383M472.5 214V405M473.5 211V380M474.5 225V404M475.5 200V394M476.5 216V390M477.5 219V405M478.5 223V394M479.5 213V397M480.5 212V393M481.5 209V389M482.5 234V383M483.5 211V386M484.5 193V416M485.5 218V385M486.5 199V380M487.5 183V412M488.5 216V391M489.5 236V370M490.5 221V375M491.5 209V394M492.5 228V378M493.5 210V366M494.5 255V359M495.5 242V378M496.5 226V368M497.5 234V366M498.5 221V372M499.5 205V377M500.5 220V393M501.5 241V362M502.5 247V367M503.5 229V403M504.5 224V368M505.5 198V388M506.5 237V382M507.5 248V374M508.5 245V364M509.5 224V388M510.5 237V375M511.5 238V373M512.5 235V387M513.5 234V379M514.5 218V385M515.5 222V394M516.5 232V387M517.5 236V382M518.5 231V377M519.5 223V371M520.5 224V372M521.5 226V402M522.5 196V395M523.5 234V385M524.5 228V376M525.5 240V378M526.5 241V367M527.5 241V373M528.5 248V402M529.5 229V386M530.5 204V368M531.5 222V364M532.5 210V397M533.5 229V373M534.5 233V369M535.5 240V370M536.5 241V367M537.5 241V376M538.5 234V374M539.5 258V372M540.5 230V343M541.5 226V405M542.5 305V307M543.5 305V307M544.5 270V351M545.5 289V361M546.5 196V423M547.5 272V344M548.5 273V362M549.5 213V409M550.5 270V344M551.5 216V386M552.5 240V374M553.5 226V412M554.5 241V382M555.5 190V404M556.5 234V384M557.5 220V401M558.5 218V380M559.5 236V365M560.5 245V366M561.5 207V369M562.5 226V383M563.5 228V379M564.5 223V384M565.5 214V383M566.5 209V395M567.5 215V388M568.5 226V391M569.5 232V399M570.5 201V391M571.5 170V413M572.5 199V396M573.5 176V453M574.5 200V404M575.5 204V405M576.5 191V399M577.5 217V389M578.5 231V376M579.5 210V392M580.5 221V378M581.5 233V372M582.5 164V412M583.5 207V417M584.5 191V408M585.5 215V412M586.5 228V404M587.5 237V369M588.5 204V379M589.5 200V381M590.5 222V387M591.5 199V414M592.5 195V425M593.5 193V417M594.5 209V404M595.5 206V393M596.5 198V402M597.5 191V392M598.5 189V418M599.5 237V389M600.5 230V396M601.5 209V419M602.5 226V375M603.5 219V394M604.5 228V372M605.5 224V369M606.5 254V368M607.5 305V319M608.5 304V308M609.5 304V308M610.5 248V359M611.5 190V409M612.5 190V453M613.5 211V393M614.5 227V395M615.5 175V433M616.5 143V446M617.5 178V413M618.5 243V378M619.5 244V378M620.5 218V386M621.5 213V395M622.5 220V397M623.5 208V437M624.5 236V395M625.5 221V382M626.5 221V401M627.5 251V361M628.5 226V369M629.5 237V370M630.5 235V387M631.5 221V381M632.5 237V368M633.5 225V397M634.5 216V388M635.5 236V406M636.5 234V366M637.5 233V376M638.5 229V383M639.5 234V372M640.5 237V371M641.5 220V394M642.5 217V381M643.5 239V363M644.5 242V383M645.5 252V362M646.5 245V392M647.5 246V370M648.5 233V372M649.5 243V380M650.5 223V398M651.5 213V412M652.5 241V366M653.5 230V386M654.5 260V354M655.5 281V335M656.5 304V308M657.5 281V337M658.5 263V341M659.5 251V363M660.5 240V363M661.5 233V374M662.5 225V385M663.5 211V392M664.5 224V388M665.5 237V361M666.5 199V375M667.5 192V431M668.5 232V366M669.5 244V378M670.5 236V367M671.5 241V372M672.5 216V377M673.5 232V379M674.5 228V383M675.5 219V426M676.5 193V407M677.5 224V388M678.5 198V411M679.5 219V403M680.5 187V386M681.5 190V412M682.5 216V384M683.5 231V373M684.5 208V383M685.5 215V416M686.5 217V393M687.5 183V430M688.5 221V397M689.5 201V390M690.5 212V407M691.5 175V379M692.5 220V386M693.5 213V404M694.5 224V394M695.5 221V400M696.5 224V391M697.5 233V397M698.5 216V380M699.5 197V404M700.5 183V421M701.5 167V411M702.5 187V416M703.5 158V446M704.5 201V400M705.5 163V443M706.5 236V371M707.5 223V389M708.5 217V410M709.5 192V451M710.5 197V409M711.5 205V405M712.5 174V417M713.5 181V412M714.5 166V410M715.5 183V424M716.5 156V419M717.5 150V428M718.5 157V445M719.5 186V409M720.5 184V395M721.5 206V422M722.5 184V392M723.5 211V401M724.5 152V415M725.5 219V381M726.5 221V391M727.5 223V398M728.5 221V377M729.5 170V388M730.5 224V356M731.5 254V344M732.5 260V353M733.5 261V349M734.5 262V345M735.5 260V354M736.5 249V351M737.5 243V369M738.5 256V373M739.5 243V380M740.5 256V362M741.5 236V376M742.5 245V364M743.5 255V356M744.5 250V348M745.5 305V307M746.5 279V333M747.5 305V307M748.5 278V332M749.5 182V397M750.5 273V352M751.5 258V363M752.5 259V353M753.5 261V351M754.5 260V350M755.5 235V371M756.5 252V352M757.5 242V364M758.5 249V357M759.5 254V352M760.5 244V373M761.5 239V383M762.5 231V359M763.5 256V362M764.5 225V366M765.5 216V405M766.5 218V405M767.5 195V422M768.5 229V396M769.5 213V390M770.5 229V382M771.5 195V387M772.5 215V408M773.5 205V388M774.5 218V397M775.5 200V390M776.5 224V385M777.5 219V386M778.5 230V392M779.5 209V373M780.5 237V374M781.5 200V412M782.5 207V416M783.5 223V364M784.5 235V385M785.5 218V379M786.5 220V389M787.5 216V377M788.5 214V409M789.5 218V394M790.5 214V384M791.5 225V391M792.5 202V386M793.5 225V378M794.5 226V383M795.5 222V394M796.5 206V384M797.5 219V392M798.5 195V407M799.5 231V392M800.5 178V405M801.5 166V435M802.5 246V390M803.5 220V390M804.5 206V402M805.5 223V381M806.5 219V389M807.5 171V405M808.5 214V414M809.5 206V384M810.5 219V405M811.5 167V441M812.5 207V405M813.5 193V426M814.5 230V382M815.5 228V385M816.5 216V378M817.5 237V369M818.5 237V358M819.5 222V380M820.5 234V368M821.5 229V369M822.5 221V374M823.5 213V371M824.5 208V389M825.5 239V396M826.5 252V357M827.5 260V346M828.5 248V368M829.5 223V398M830.5 237V374M831.5 238V376M832.5 226V399M833.5 196V433M834.5 216V392M835.5 203V394M836.5 220V370M837.5 229V360M838.5 206V410M839.5 218V386M840.5 209V402M841.5 188V411M842.5 223V397M843.5 218V392M844.5 211V402M845.5 224V425M846.5 233V389M847.5 218V392M848.5 250V361M849.5 256V373M850.5 206V401M851.5 213V398M852.5 218V375M853.5 233V369M854.5 246V364M855.5 196V380M856.5 179V408M857.5 226V395M858.5 240V369M859.5 215V397M860.5 236V394M861.5 246V361M862.5 228V368M863.5 195V386M864.5 167V411M865.5 144V435M866.5 212V449M867.5 236V370M868.5 213V399M869.5 173V446M870.5 225V385M871.5 207V401M872.5 190V414M873.5 175V422M874.5 198V407M875.5 214V397M876.5 231V367M877.5 195V404M878.5 195V368M879.5 195V420M880.5 164V456M881.5 182V430M882.5 217V384M883.5 239V319M884.5 304V308M885.5 304V308M886.5 289V312M887.5 286V327M888.5 288V324M889.5 288V321M890.5 287V331M891.5 272V323M892.5 218V367M893.5 213V378M894.5 286V324M895.5 226V374M896.5 286V381M897.5 200V375M898.5 256V356M899.5 289V312M900.5 292V310M901.5 295V322M902.5 281V340M903.5 293V317M904.5 292V325M905.5 295V321M906.5 287V316M907.5 296V320M908.5 294V312M909.5 293V312M910.5 298V313M911.5 301V310M912.5 297V314M913.5 304V307M914.5 304V308M915.5 304V308M916.5 304V308M917.5 304V308M918.5 304V308M919.5 304V308M920.5 304V308M921.5 277V318M922.5 281V330M923.5 181V422M924.5 253V353M925.5 262V344M926.5 266V339M927.5 265V342M928.5 262V345M929.5 259V340M930.5 268V343M931.5 259V347M932.5 270V350M933.5 262V340M934.5 265V343M935.5 269V344M936.5 267V352M937.5 262V348M938.5 256V345M939.5 247V350M940.5 233V358M941.5 246V369M942.5 230V361M943.5 258V359M944.5 245V366M945.5 227V397M946.5 216V373M947.5 245V358M948.5 250V363M949.5 229V390M950.5 242V366M951.5 247V353M952.5 225V371M953.5 247V368M954.5 243V352M955.5 235V373M956.5 252V357M957.5 247V363M958.5 252V363M959.5 228V360M960.5 242V378M961.5 234V368M962.5 248V373M963.5 249V370M964.5 243V367M965.5 235V394M966.5 231V369M967.5 181V404M968.5 234V379M969.5 213V375M970.5 172V399M971.5 195V392M972.5 217V395M973.5 222V381M974.5 237V376M975.5 230V376M976.5 218V373M977.5 193V423M978.5 232V384M979.5 178V399M980.5 219V383M981.5 204V386M982.5 211V392M983.5 170V402M984.5 220V378M985.5 193V412M986.5 224V379M987.5 210V387M988.5 222V381M989.5 244V375M990.5 246V374M991.5 245V383M992.5 223V369M993.5 260V358M994.5 233V370M995.5 186V426M996.5 239V375M997.5 226V368M998.5 247V359M999.5 220V409M1000.5 236V363M1001.5 225V405M1002.5 210V368M1003.5 200V369M1004.5 185V401M1005.5 234V375M1006.5 228V376M1007.5 236V378M1008.5 217V373M1009.5 225V392M1010.5 213V386M1011.5 222V396M1012.5 207V386M1013.5 213V407M1014.5 226V371M1015.5 219V374M1016.5 209V379M1017.5 223V374M1018.5 182V415M1019.5 222V396M1020.5 182V417M1021.5 228V387M1022.5 175V435M1023.5 202V397M1024.5 216V392M1025.5 182V440M1026.5 240V367M1027.5 259V357M1028.5 244V359M1029.5 256V365M1030.5 211V383M1031.5 244V348M1032.5 245V364M1033.5 260V351M1034.5 257V349M1035.5 255V354M1036.5 257V363M1037.5 255V355M1038.5 248V357M1039.5 256V348M1040.5 240V353M1041.5 190V402M1042.5 229V387M1043.5 220V394M1044.5 224V403M1045.5 218V409M1046.5 221V385M1047.5 225V391M1048.5 209V402M1049.5 218V390M1050.5 198V385M1051.5 222V397M1052.5 225V388M1053.5 230V378M1054.5 211V397M1055.5 227V386M1056.5 214V385M1057.5 305V319M1058.5 304V308M1059.5 304V308M1060.5 304V308M1061.5 304V308M1062.5 302V317M1063.5 273V346M1064.5 260V368M1065.5 250V361M1066.5 244V366M1067.5 257V354M1068.5 157V469M1069.5 198V418M1070.5 189V422M1071.5 199V403M1072.5 174V438M1073.5 198V410M1074.5 191V439M1075.5 211V404M1076.5 178V427M1077.5 209V443M1078.5 188V465M1079.5 218V431M1080.5 212V410M1081.5 199V442M1082.5 219V396M1083.5 237V381M1084.5 213V409M1085.5 209V403M1086.5 231V407M1087.5 225V390M1088.5 217V390M1089.5 217V401M1090.5 231V381M1091.5 237V388M1092.5 223V393M1093.5 228V423M1094.5 189V396M1095.5 218V380M1096.5 211V401M1097.5 225V374M1098.5 228V391M1099.5 227V378M1100.5 226V379M1101.5 230V390M1102.5 185V402M1103.5 228V376M1104.5 224V382M1105.5 214V404M1106.5 212V393M1107.5 223V406M1108.5 225V393M1109.5 185V426M1110.5 195V419M1111.5 225V390M1112.5 180V400M1113.5 190V423M1114.5 171V445M1115.5 216V402M1116.5 217V398M1117.5 196V409M1118.5 204V422M1119.5 179V432M1120.5 184V427M1121.5 182V451M1122.5 215V403M1123.5 230V371M1124.5 230V373M137.5 615V662M138.5 603V669M139.5 593V682M140.5 586V692M141.5 604V695M142.5 616V701M143.5 609V671M144.5 609V679M145.5 591V688M146.5 605V682M147.5 611V671M148.5 618V662M149.5 611V670M150.5 602V673M151.5 593V686M152.5 583V702M153.5 608V665M154.5 604V674M155.5 601V679M156.5 612V670M157.5 616V666M158.5 620V665M159.5 614V671M160.5 608V676M161.5 587V695M162.5 569V680M163.5 596V703M164.5 573V703M165.5 569V695M166.5 567V701M167.5 569V721M168.5 561V705M169.5 582V697M170.5 583V695M171.5 583V697M172.5 579V700M173.5 575V700M174.5 577V715M175.5 575V698M176.5 588V700M177.5 588V703M178.5 570V693M179.5 590V698M180.5 583V696M181.5 590V695M182.5 598V689M183.5 588V695M184.5 603V700M185.5 611V667M186.5 594V682M187.5 593V685M188.5 590V710M189.5 552V733M190.5 592V683M191.5 563V718M192.5 573V705M193.5 579V722M194.5 566V691M195.5 558V717M196.5 567V709M197.5 537V721M198.5 558V732M199.5 547V707M200.5 585V701M201.5 573V737M202.5 553V728M203.5 548V719M204.5 541V747M205.5 541V751M206.5 560V739M207.5 558V743M208.5 546V745M209.5 564V766M210.5 536V749M211.5 535V754M212.5 518V776M213.5 547V774M214.5 531V757M215.5 524V744M216.5 501V801M217.5 523V743M218.5 507V773M219.5 521V767M220.5 519V769M221.5 514V762M222.5 513V752M223.5 526V794M224.5 523V771M225.5 519V774M226.5 507V804M227.5 549V720M228.5 564V722M229.5 531V737M230.5 548V726M231.5 538V745M232.5 515V760M233.5 547V735M234.5 548V719M235.5 546V723M236.5 570V700M237.5 565V713M238.5 555V710M239.5 564V727M240.5 564V712M241.5 549V712M242.5 551V713M243.5 558V716M244.5 548V729M245.5 537V743M246.5 546V727M247.5 546V747M248.5 549V730M249.5 541V727M250.5 536V742M251.5 527V751M252.5 552V717M253.5 545V744M254.5 557V710M255.5 561V707M256.5 560V719M257.5 564V710M258.5 568V706M259.5 522V746M260.5 555V723M261.5 530V719M262.5 556V705M263.5 560V696M264.5 639V643M265.5 639V643M266.5 639V643M267.5 639V643M268.5 637V648M269.5 614V669M270.5 625V662M271.5 614V669M272.5 605V673M273.5 618V676M274.5 627V659M275.5 631V663M276.5 615V669M277.5 629V653M278.5 619V658M279.5 625V664M280.5 631V653M281.5 623V658M282.5 628V650M283.5 633V649M284.5 629V653M285.5 627V658M286.5 632V650M287.5 634V647M288.5 629V654M289.5 627V650M290.5 627V646M291.5 637V644M292.5 627V667M293.5 622V670M294.5 601V674M295.5 608V670M296.5 621V666M297.5 612V666M298.5 603V678M299.5 618V657M300.5 607V673M301.5 601V688M302.5 597V672M303.5 609V685M304.5 613V684M305.5 618V671M306.5 590V698M307.5 611V675M308.5 611V668M309.5 611V679M310.5 609V677M311.5 593V676M312.5 588V703M313.5 572V689M314.5 594V682M315.5 579V708M316.5 596V687M317.5 584V700M318.5 589V694M319.5 597V681M320.5 605V672M321.5 593V683M322.5 594V679M323.5 595V688M324.5 584V704M325.5 590V714M326.5 589V685M327.5 586V706M328.5 591V697M329.5 591V688M330.5 576V700M331.5 596V681M332.5 585V689M333.5 592V682M334.5 595V682M335.5 593V692M336.5 594V691M337.5 590V684M338.5 597V678M339.5 589V684M340.5 579V684M341.5 590V685M342.5 577V719M343.5 591V689M344.5 580V717M345.5 586V696M346.5 589V710M347.5 561V722M348.5 587V702M349.5 575V696M350.5 577V694M351.5 556V699M352.5 578V731M353.5 582V701M354.5 584V700M355.5 589V693M356.5 589V689M357.5 581V696M358.5 565V709M359.5 551V722M360.5 571V729M361.5 565V721M362.5 588V692M363.5 576V713M364.5 561V728M365.5 565V714M366.5 567V712M367.5 565V723M368.5 579V700M369.5 584V716M370.5 578V704M371.5 577V706M372.5 590V711M373.5 569V700M374.5 574V707M375.5 570V696M376.5 590V703M377.5 596V681M378.5 587V699M379.5 580V700M380.5 574V708M381.5 580V708M382.5 573V694M383.5 564V727M384.5 565V717M385.5 564V739M386.5 531V731M387.5 554V732M388.5 530V761M389.5 560V708M390.5 578V707M391.5 579V696M392.5 574V698M393.5 569V709M394.5 561V718M395.5 574V700M396.5 574V703M397.5 561V696M398.5 581V712M399.5 557V729M400.5 570V708M401.5 552V736M402.5 583V695M403.5 566V703M404.5 546V724M405.5 556V713M406.5 544V721M407.5 561V730M408.5 553V719M409.5 560V709M410.5 570V716M411.5 523V751M412.5 597V684M413.5 552V708M414.5 534V715M415.5 568V695M416.5 545V719M417.5 570V686M418.5 639V643M419.5 639V643M420.5 639V643M421.5 639V643M422.5 639V643M423.5 639V643M424.5 639V643M425.5 639V643M426.5 639V643M427.5 639V643M428.5 639V643M429.5 603V686M430.5 599V687M431.5 584V698M432.5 572V711M433.5 567V709M434.5 587V704M435.5 582V694M436.5 584V712M437.5 571V704M438.5 576V714M439.5 565V710M440.5 549V721M441.5 539V734M442.5 546V723M443.5 560V729M444.5 562V712M445.5 556V713M446.5 543V719M447.5 541V733M448.5 559V730M449.5 554V728M450.5 556V711M451.5 567V712M452.5 562V717M453.5 566V707M454.5 578V704M455.5 565V708M456.5 575V700M457.5 573V696M458.5 567V719M459.5 565V700M460.5 576V704M461.5 575V705M462.5 565V699M463.5 554V694M464.5 573V698M465.5 587V709M466.5 556V715M467.5 569V708M468.5 576V713M469.5 554V739M470.5 562V727M471.5 554V718M472.5 549V740M473.5 546V715M474.5 560V739M475.5 535V729M476.5 551V725M477.5 554V740M478.5 558V729M479.5 548V732M480.5 547V728M481.5 544V724M482.5 569V718M483.5 546V721M484.5 528V751M485.5 553V720M486.5 534V715M487.5 518V747M488.5 551V726M489.5 571V705M490.5 556V710M491.5 544V729M492.5 563V713M493.5 545V701M494.5 590V694M495.5 577V713M496.5 561V703M497.5 569V701M498.5 556V707M499.5 540V712M500.5 555V728M501.5 576V697M502.5 582V702M503.5 564V738M504.5 559V703M505.5 533V723M506.5 572V717M507.5 583V709M508.5 580V699M509.5 559V723M510.5 572V710M511.5 573V708M512.5 570V722M513.5 569V714M514.5 553V720M515.5 557V729M516.5 567V722M517.5 571V717M518.5 566V712M519.5 558V706M520.5 559V707M521.5 561V737M522.5 531V730M523.5 569V720M524.5 563V711M525.5 575V713M526.5 576V702M527.5 576V708M528.5 583V737M529.5 564V721M530.5 539V703M531.5 557V699M532.5 545V732M533.5 564V708M534.5 568V704M535.5 575V705M536.5 576V702M537.5 576V711M538.5 569V709M539.5 593V707M540.5 565V678M541.5 561V740M542.5 640V642M543.5 640V642M544.5 605V686M545.5 624V696M546.5 531V758M547.5 607V679M548.5 608V697M549.5 548V744M550.5 605V679M551.5 551V721M552.5 575V709M553.5 561V747M554.5 576V717M555.5 525V739M556.5 569V719M557.5 555V736M558.5 553V715M559.5 571V700M560.5 580V701M561.5 542V704M562.5 561V718M563.5 563V714M564.5 558V719M565.5 549V718M566.5 544V730M567.5 550V723M568.5 561V726M569.5 567V734M570.5 536V726M571.5 505V748M572.5 534V731M573.5 511V788M574.5 535V739M575.5 539V740M576.5 526V734M577.5 552V724M578.5 566V711M579.5 545V727M580.5 556V713M581.5 568V707M582.5 499V747M583.5 542V752M584.5 526V743M585.5 550V747M586.5 563V739M587.5 572V704M588.5 539V714M589.5 535V716M590.5 557V722M591.5 534V749M592.5 530V760M593.5 528V752M594.5 544V739M595.5 541V728M596.5 533V737M597.5 526V727M598.5 524V753M599.5 572V724M600.5 565V731M601.5 544V754M602.5 561V710M603.5 554V729M604.5 563V707M605.5 559V704M606.5 589V703M607.5 640V654M608.5 639V643M609.5 639V643M610.5 583V694M611.5 525V744M612.5 525V788M613.5 546V728M614.5 562V730M615.5 510V768M616.5 478V781M617.5 513V748M618.5 578V713M619.5 579V713M620.5 553V721M621.5 548V730M622.5 555V732M623.5 543V772M624.5 571V730M625.5 556V717M626.5 556V736M627.5 586V696M628.5 561V704M629.5 572V705M630.5 570V722M631.5 556V716M632.5 572V703M633.5 560V732M634.5 551V723M635.5 571V741M636.5 569V701M637.5 568V711M638.5 564V718M639.5 569V707M640.5 572V706M641.5 555V729M642.5 552V716M643.5 574V698M644.5 577V718M645.5 587V697M646.5 580V727M647.5 581V705M648.5 568V707M649.5 578V715M650.5 558V733M651.5 548V747M652.5 576V701M653.5 565V721M654.5 595V689M655.5 616V670M656.5 639V643M657.5 616V672M658.5 598V676M659.5 586V698M660.5 575V698M661.5 568V709M662.5 560V720M663.5 546V727M664.5 559V723M665.5 572V696M666.5 534V710M667.5 527V766M668.5 567V701M669.5 579V713M670.5 571V702M671.5 576V707M672.5 551V712M673.5 567V714M674.5 563V718M675.5 554V761M676.5 528V742M677.5 559V723M678.5 533V746M679.5 554V738M680.5 522V721M681.5 525V747M682.5 551V719M683.5 566V708M684.5 543V718M685.5 550V751M686.5 552V728M687.5 518V765M688.5 556V732M689.5 536V725M690.5 547V742M691.5 510V714M692.5 555V721M693.5 548V739M694.5 559V729M695.5 556V735M696.5 559V726M697.5 568V732M698.5 551V715M699.5 532V739M700.5 518V756M701.5 502V746M702.5 522V751M703.5 493V781M704.5 536V735M705.5 498V778M706.5 571V706M707.5 558V724M708.5 552V745M709.5 527V786M710.5 532V744M711.5 540V740M712.5 509V752M713.5 516V747M714.5 501V745M715.5 518V759M716.5 491V754M717.5 485V763M718.5 492V780M719.5 521V744M720.5 519V730M721.5 541V757M722.5 519V727M723.5 546V736M724.5 487V750M725.5 554V716M726.5 556V726M727.5 558V733M728.5 556V712M729.5 505V723M730.5 559V691M731.5 589V679M732.5 595V688M733.5 596V684M734.5 597V680M735.5 595V689M736.5 584V686M737.5 578V704M738.5 591V708M739.5 578V715M740.5 591V697M741.5 571V711M742.5 580V699M743.5 590V691M744.5 585V683M745.5 640V642M746.5 614V668M747.5 640V642M748.5 613V667M749.5 517V732M750.5 608V687M751.5 593V698M752.5 594V688M753.5 596V686M754.5 595V685M755.5 570V706M756.5 587V687M757.5 577V699M758.5 584V692M759.5 589V687M760.5 579V708M761.5 574V718M762.5 566V694M763.5 591V697M764.5 560V701M765.5 551V740M766.5 553V740M767.5 530V757M768.5 564V731M769.5 548V725M770.5 564V717M771.5 530V722M772.5 550V743M773.5 540V723M774.5 553V732M775.5 535V725M776.5 559V720M777.5 554V721M778.5 565V727M779.5 544V708M780.5 572V709M781.5 535V747M782.5 542V751M783.5 558V699M784.5 570V720M785.5 553V714M786.5 555V724M787.5 551V712M788.5 549V744M789.5 553V729M790.5 549V719M791.5 560V726M792.5 537V721M793.5 560V713M794.5 561V718M795.5 557V729M796.5 541V719M797.5 554V727M798.5 530V742M799.5 566V727M800.5 513V740M801.5 501V770M802.5 581V725M803.5 555V725M804.5 541V737M805.5 558V716M806.5 554V724M807.5 506V740M808.5 549V749M809.5 541V719M810.5 554V740M811.5 502V776M812.5 542V740M813.5 528V761M814.5 565V717M815.5 563V720M816.5 551V713M817.5 572V704M818.5 572V693M819.5 557V715M820.5 569V703M821.5 564V704M822.5 556V709M823.5 548V706M824.5 543V724M825.5 574V731M826.5 587V692M827.5 595V681M828.5 583V703M829.5 558V733M830.5 572V709M831.5 573V711M832.5 561V734M833.5 531V768M834.5 551V727M835.5 538V729M836.5 555V705M837.5 564V695M838.5 541V745M839.5 553V721M840.5 544V737M841.5 523V746M842.5 558V732M843.5 553V727M844.5 546V737M845.5 559V760M846.5 568V724M847.5 553V727M848.5 585V696M849.5 591V708M850.5 541V736M851.5 548V733M852.5 553V710M853.5 568V704M854.5 581V699M855.5 531V715M856.5 514V743M857.5 561V730M858.5 575V704M859.5 550V732M860.5 571V729M861.5 581V696M862.5 563V703M863.5 530V721M864.5 502V746M865.5 479V770M866.5 547V784M867.5 571V705M868.5 548V734M869.5 508V781M870.5 560V720M871.5 542V736M872.5 525V749M873.5 510V757M874.5 533V742M875.5 549V732M876.5 566V702M877.5 530V739M878.5 530V703M879.5 530V755M880.5 499V791M881.5 517V765M882.5 552V719M883.5 574V654M884.5 639V643M885.5 639V643M886.5 624V647M887.5 621V662M888.5 623V659M889.5 623V656M890.5 622V666M891.5 607V658M892.5 553V702M893.5 548V713M894.5 621V659M895.5 561V709M896.5 621V716M897.5 535V710M898.5 591V691M899.5 624V647M900.5 627V645M901.5 630V657M902.5 616V675M903.5 628V652M904.5 627V660M905.5 630V656M906.5 622V651M907.5 631V655M908.5 629V647M909.5 628V647M910.5 633V648M911.5 636V645M912.5 632V649M913.5 639V642M914.5 639V643M915.5 639V643M916.5 639V643M917.5 639V643M918.5 639V643M919.5 639V643M920.5 639V643M921.5 612V653M922.5 616V665M923.5 516V757M924.5 588V688M925.5 597V679M926.5 601V674M927.5 600V677M928.5 597V680M929.5 594V675M930.5 603V678M931.5 594V682M932.5 605V685M933.5 597V675M934.5 600V678M935.5 604V679M936.5 602V687M937.5 597V683M938.5 591V680M939.5 582V685M940.5 568V693M941.5 581V704M942.5 565V696M943.5 593V694M944.5 580V701M945.5 562V732M946.5 551V708M947.5 580V693M948.5 585V698M949.5 564V725M950.5 577V701M951.5 582V688M952.5 560V706M953.5 582V703M954.5 578V687M955.5 570V708M956.5 587V692M957.5 582V698M958.5 587V698M959.5 563V695M960.5 577V713M961.5 569V703M962.5 583V708M963.5 584V705M964.5 578V702M965.5 570V729M966.5 566V704M967.5 516V739M968.5 569V714M969.5 548V710M970.5 507V734M971.5 530V727M972.5 552V730M973.5 557V716M974.5 572V711M975.5 565V711M976.5 553V708M977.5 528V758M978.5 567V719M979.5 513V734M980.5 554V718M981.5 539V721M982.5 546V727M983.5 505V737M984.5 555V713M985.5 528V747M986.5 559V714M987.5 545V722M988.5 557V716M989.5 579V710M990.5 581V709M991.5 580V718M992.5 558V704M993.5 595V693M994.5 568V705M995.5 521V761M996.5 574V710M997.5 561V703M998.5 582V694M999.5 555V744M1000.5 571V698M1001.5 560V740M1002.5 545V703M1003.5 535V704M1004.5 520V736M1005.5 569V710M1006.5 563V711M1007.5 571V713M1008.5 552V708M1009.5 560V727M1010.5 548V721M1011.5 557V731M1012.5 542V721M1013.5 548V742M1014.5 561V706M1015.5 554V709M1016.5 544V714M1017.5 558V709M1018.5 517V750M1019.5 557V731M1020.5 517V752M1021.5 563V722M1022.5 510V770M1023.5 537V732M1024.5 551V727M1025.5 517V775M1026.5 575V702M1027.5 594V692M1028.5 579V694M1029.5 591V700M1030.5 546V718M1031.5 579V683M1032.5 580V699M1033.5 595V686M1034.5 592V684M1035.5 590V689M1036.5 592V698M1037.5 590V690M1038.5 583V692M1039.5 591V683M1040.5 575V688M1041.5 525V737M1042.5 564V722M1043.5 555V729M1044.5 559V738M1045.5 553V744M1046.5 556V720M1047.5 560V726M1048.5 544V737M1049.5 553V725M1050.5 533V720M1051.5 557V732M1052.5 560V723M1053.5 565V713M1054.5 546V732M1055.5 562V721M1056.5 549V720M1057.5 640V654M1058.5 639V643M1059.5 639V643M1060.5 639V643M1061.5 639V643M1062.5 637V652M1063.5 608V681M1064.5 595V703M1065.5 585V696M1066.5 579V701M1067.5 592V689M1068.5 492V804M1069.5 533V753M1070.5 524V757M1071.5 534V738M1072.5 509V773M1073.5 533V745M1074.5 526V774M1075.5 546V739M1076.5 513V762M1077.5 544V778M1078.5 523V800M1079.5 553V766M1080.5 547V745M1081.5 534V777M1082.5 554V731M1083.5 572V716M1084.5 548V744M1085.5 544V738M1086.5 566V742M1087.5 560V725M1088.5 552V725M1089.5 552V736M1090.5 566V716M1091.5 572V723M1092.5 558V728M1093.5 563V758M1094.5 524V731M1095.5 553V715M1096.5 546V736M1097.5 560V709M1098.5 563V726M1099.5 562V713M1100.5 561V714M1101.5 565V725M1102.5 520V737M1103.5 563V711M1104.5 559V717M1105.5 549V739M1106.5 547V728M1107.5 558V741M1108.5 560V728M1109.5 520V761M1110.5 530V754M1111.5 560V725M1112.5 515V735M1113.5 525V758M1114.5 506V780M1115.5 551V737M1116.5 552V733M1117.5 531V744M1118.5 539V757M1119.5 514V767M1120.5 519V762M1121.5 517V786M1122.5 550V738M1123.5 565V706M1124.5 565V708" stroke="#3232c8" stroke-width="1" fill="none"/><path d="M137.5 295V314M138.5 297V315M139.5 296V318M140.5 296V316M141.5 298V315M142.5 297V315M143.5 296V317M144.5 296V316M145.5 294V320M146.5 298V314M147.5 295V314M148.5 298V316M149.5 297V316M150.5 297V314M151.5 298V315M152.5 297V317M153.5 297V315M154.5 297V315M155.5 296V314M156.5 297V314M157.5 298V314M158.5 296V314M159.5 297V318M160.5 296V316M161.5 297V316M162.5 294V318M163.5 295V318M164.5 293V318M165.5 292V318M166.5 293V321M167.5 291V319M168.5 292V320M169.5 293V320M170.5 292V320M171.5 292V319M172.5 291V319M173.5 291V320M174.5 291V322M175.5 294V319M176.5 289V319M177.5 294V319M178.5 293V319M179.5 295V320M180.5 293V319M181.5 295V319M182.5 295V316M183.5 295V318M184.5 296V315M185.5 296V317M186.5 296V317M187.5 294V316M188.5 294V317M189.5 292V317M190.5 294V318M191.5 294V317M192.5 294V319M193.5 292V320M194.5 294V319M195.5 292V319M196.5 293V319M197.5 292V320M198.5 291V321M199.5 293V319M200.5 292V319M201.5 291V320M202.5 292V320M203.5 290V323M204.5 290V322M205.5 289V323M206.5 289V325M207.5 288V324M208.5 290V325M209.5 289V324M210.5 287V324M211.5 287V324M212.5 288V325M213.5 287V323M214.5 288V324M215.5 288V325M216.5 288V329M217.5 285V325M218.5 287V325M219.5 285V326M220.5 287V326M221.5 283V329M222.5 286V326M223.5 286V324M224.5 288V327M225.5 288V325M226.5 288V323M227.5 291V323M228.5 290V322M229.5 289V325M230.5 290V323M231.5 290V321M232.5 290V321M233.5 291V322M234.5 291V320M235.5 292V322M236.5 291V322M237.5 290V322M238.5 291V320M239.5 290V323M240.5 289V323M241.5 290V321M242.5 291V321M243.5 289V324M244.5 287V321M245.5 290V323M246.5 288V322M247.5 288V322M248.5 289V324M249.5 288V323M250.5 290V323M251.5 289V324M252.5 289V321M253.5 290V323M254.5 291V321M255.5 291V325M256.5 289V322M257.5 292V321M258.5 290V323M259.5 290V320M260.5 289V323M261.5 292V320M262.5 289V321M263.5 290V321M264.5 305V307M265.5 305V307M266.5 305V307M267.5 305V307M268.5 302V312M269.5 302V312M270.5 299V312M271.5 302V311M272.5 300V311M273.5 299V313M274.5 300V312M275.5 298V312M276.5 301V313M277.5 301V313M278.5 300V312M279.5 300V311M280.5 302V313M281.5 300V312M282.5 301V311M283.5 302V310M284.5 297V314M285.5 301V312M286.5 302V311M287.5 300V310M288.5 301V310M289.5 303V311M290.5 304V309M291.5 304V309M292.5 303V310M293.5 301V311M294.5 301V312M295.5 299V311M296.5 298V312M297.5 299V313M298.5 295V315M299.5 298V316M300.5 298V315M301.5 297V314M302.5 295V314M303.5 296V314M304.5 297V314M305.5 297V316M306.5 296V315M307.5 298V316M308.5 296V316M309.5 296V316M310.5 296V317M311.5 297V317M312.5 295V317M313.5 295V316M314.5 295V319M315.5 295V316M316.5 290V317M317.5 295V317M318.5 296V317M319.5 296V316M320.5 295V316M321.5 295V316M322.5 295V320M323.5 294V318M324.5 295V317M325.5 294V318M326.5 295V319M327.5 293V318M328.5 294V318M329.5 292V319M330.5 294V317M331.5 294V317M332.5 293V319M333.5 290V318M334.5 293V317M335.5 293V319M336.5 294V317M337.5 294V321M338.5 295V319M339.5 295V318M340.5 293V319M341.5 293V317M342.5 295V318M343.5 289V318M344.5 293V318M345.5 294V318M346.5 292V320M347.5 294V320M348.5 294V319M349.5 292V324M350.5 292V323M351.5 292V321M352.5 294V322M353.5 293V319M354.5 294V319M355.5 293V318M356.5 292V319M357.5 290V320M358.5 294V319M359.5 293V320M360.5 293V319M361.5 293V320M362.5 293V321M363.5 290V323M364.5 293V320M365.5 293V320M366.5 292V321M367.5 293V319M368.5 292V320M369.5 291V320M370.5 291V321M371.5 294V319M372.5 292V320M373.5 292V319M374.5 293V318M375.5 292V320M376.5 292V318M377.5 293V318M378.5 293V318M379.5 293V318M380.5 293V319M381.5 289V320M382.5 292V320M383.5 292V321M384.5 291V325M385.5 293V322M386.5 290V319M387.5 291V321M388.5 291V320M389.5 291V320M390.5 292V320M391.5 290V321M392.5 291V321M393.5 291V321M394.5 291V320M395.5 290V321M396.5 292V321M397.5 290V320M398.5 291V321M399.5 291V325M400.5 293V319M401.5 291V320M402.5 292V321M403.5 292V319M404.5 290V322M405.5 292V321M406.5 291V319M407.5 293V321M408.5 292V320M409.5 292V319M410.5 294V320M411.5 292V319M412.5 294V317M413.5 291V320M414.5 293V318M415.5 293V319M416.5 293V320M417.5 294V322M418.5 305V307M419.5 305V307M420.5 305V307M421.5 305V307M422.5 305V307M423.5 305V307M424.5 305V307M425.5 305V307M426.5 305V307M427.5 305V307M428.5 305V307M429.5 295V317M430.5 294V318M431.5 294V319M432.5 294V318M433.5 294V320M434.5 293V320M435.5 294V320M436.5 293V320M437.5 293V324M438.5 292V320M439.5 291V321M440.5 291V321M441.5 291V321M442.5 291V321M443.5 287V323M444.5 289V321M445.5 290V322M446.5 290V322M447.5 289V323M448.5 289V321M449.5 290V321M450.5 291V322M451.5 291V321M452.5 292V320M453.5 292V320M454.5 292V320M455.5 289V320M456.5 292V320M457.5 290V319M458.5 291V321M459.5 291V321M460.5 291V321M461.5 291V320M462.5 291V320M463.5 293V319M464.5 292V320M465.5 292V321M466.5 292V321M467.5 290V321M468.5 291V321M469.5 290V320M470.5 291V322M471.5 289V320M472.5 289V322M473.5 287V323M474.5 289V323M475.5 290V323M476.5 289V322M477.5 287V323M478.5 290V323M479.5 289V322M480.5 287V324M481.5 291V322M482.5 290V323M483.5 291V327M484.5 291V322M485.5 290V323M486.5 291V321M487.5 290V321M488.5 291V322M489.5 287V321M490.5 290V322M491.5 292V321M492.5 292V319M493.5 292V321M494.5 293V321M495.5 291V319M496.5 291V320M497.5 291V319M498.5 292V319M499.5 291V321M500.5 289V320M501.5 292V319M502.5 291V320M503.5 292V321M504.5 292V319M505.5 292V321M506.5 292V321M507.5 292V320M508.5 291V321M509.5 291V324M510.5 291V321M511.5 291V320M512.5 287V322M513.5 290V322M514.5 292V322M515.5 291V322M516.5 290V322M517.5 290V321M518.5 292V320M519.5 291V322M520.5 291V322M521.5 290V321M522.5 292V320M523.5 290V320M524.5 291V320M525.5 290V322M526.5 293V321M527.5 291V320M528.5 293V323M529.5 290V322M530.5 292V319M531.5 291V319M532.5 292V320M533.5 291V321M534.5 291V320M535.5 290V320M536.5 293V319M537.5 293V319M538.5 291V317M539.5 295V315M540.5 297V316M541.5 300V312M542.5 305V307M543.5 305V307M544.5 301V310M545.5 300V313M546.5 298V314M547.5 297V314M548.5 297V316M549.5 293V319M550.5 293V316M551.5 293V321M552.5 293V318M553.5 290V320M554.5 292V318M555.5 291V319M556.5 292V321M557.5 292V321M558.5 291V320M559.5 292V320M560.5 291V319M561.5 290V320M562.5 291V320M563.5 290V321M564.5 292V324M565.5 289V321M566.5 291V324M567.5 289V323M568.5 289V321M569.5 290V323M570.5 290V322M571.5 288V323M572.5 288V323M573.5 288V322M574.5 288V323M575.5 289V321M576.5 289V323M577.5 289V321M578.5 292V322M579.5 290V323M580.5 287V321M581.5 292V321M582.5 290V322M583.5 290V321M584.5 291V322M585.5 291V322M586.5 292V321M587.5 292V321M588.5 288V321M589.5 291V320M590.5 289V322M591.5 290V322M592.5 289V324M593.5 289V322M594.5 289V323M595.5 288V324M596.5 289V322M597.5 290V323M598.5 287V324M599.5 291V324M600.5 289V324M601.5 291V320M602.5 292V319M603.5 294V319M604.5 292V320M605.5 294V319M606.5 295V318M607.5 305V317M608.5 305V307M609.5 305V307M610.5 293V319M611.5 291V320M612.5 292V322M613.5 292V320M614.5 292V325M615.5 291V322M616.5 290V320M617.5 291V321M618.5 292V320M619.5 288V321M620.5 291V321M621.5 292V321M622.5 290V322M623.5 290V322M624.5 290V321M625.5 291V321M626.5 293V320M627.5 294V321M628.5 293V320M629.5 291V321M630.5 291V319M631.5 292V319M632.5 292V321M633.5 292V320M634.5 291V320M635.5 291V321M636.5 291V320M637.5 292V320M638.5 292V322M639.5 293V321M640.5 291V321M641.5 291V319M642.5 291V320M643.5 293V320M644.5 293V320M645.5 291V320M646.5 291V320M647.5 291V320M648.5 290V319M649.5 294V319M650.5 294V322M651.5 294V319M652.5 293V320M653.5 294V318M654.5 297V316M655.5 295V315M656.5 305V307M657.5 297V316M658.5 293V316M659.5 294V316M660.5 295V317M661.5 295V319M662.5 294V320M663.5 293V322M664.5 293V319M665.5 291V320M666.5 293V325M667.5 292V321M668.5 290V320M669.5 292V322M670.5 291V321M671.5 292V321M672.5 292V322M673.5 288V321M674.5 290V321M675.5 290V321M676.5 289V322M677.5 290V322M678.5 286V321M679.5 289V322M680.5 291V323M681.5 291V323M682.5 291V321M683.5 291V322M684.5 289V322M685.5 290V322M686.5 290V322M687.5 289V322M688.5 290V323M689.5 291V323M690.5 290V324M691.5 290V322M692.5 288V323M693.5 291V322M694.5 289V323M695.5 289V322M696.5 291V326M697.5 291V323M698.5 290V323M699.5 289V323M700.5 289V323M701.5 289V325M702.5 289V323M703.5 289V323M704.5 289V323M705.5 291V322M706.5 290V320M707.5 291V321M708.5 289V325M709.5 291V322M710.5 288V322M711.5 289V323M712.5 288V324M713.5 288V325M714.5 287V326M715.5 287V326M716.5 288V324M717.5 288V325M718.5 288V324M719.5 287V324M720.5 288V322M721.5 289V325M722.5 290V323M723.5 289V323M724.5 289V323M725.5 291V321M726.5 288V321M727.5 288V320M728.5 292V319M729.5 293V320M730.5 291V318M731.5 295V319M732.5 293V317M733.5 292V319M734.5 295V319M735.5 294V319M736.5 294V318M737.5 293V319M738.5 293V317M739.5 295V319M740.5 296V317M741.5 297V318M742.5 296V315M743.5 300V314M744.5 301V310M745.5 305V307M746.5 303V307M747.5 305V307M748.5 302V310M749.5 297V313M750.5 298V314M751.5 295V316M752.5 294V317M753.5 295V316M754.5 294V319M755.5 294V318M756.5 294V320M757.5 294V319M758.5 294V318M759.5 294V320M760.5 294V318M761.5 293V320M762.5 292V319M763.5 293V320M764.5 292V320M765.5 291V319M766.5 292V320M767.5 292V320M768.5 290V321M769.5 291V323M770.5 290V323M771.5 289V324M772.5 289V323M773.5 290V321M774.5 290V326M775.5 290V323M776.5 289V322M777.5 289V325M778.5 289V322M779.5 291V320M780.5 292V321M781.5 292V320M782.5 292V320M783.5 288V320M784.5 291V324M785.5 291V322M786.5 292V322M787.5 289V320M788.5 290V322M789.5 290V321M790.5 290V321M791.5 291V323M792.5 289V322M793.5 290V322M794.5 291V321M795.5 290V322M796.5 290V322M797.5 289V321M798.5 287V322M799.5 291V321M800.5 289V321M801.5 289V322M802.5 291V322M803.5 290V321M804.5 288V322M805.5 291V321M806.5 288V322M807.5 289V324M808.5 289V323M809.5 290V324M810.5 290V325M811.5 289V321M812.5 291V323M813.5 291V322M814.5 292V322M815.5 292V321M816.5 291V320M817.5 290V319M818.5 290V319M819.5 293V323M820.5 292V320M821.5 291V321M822.5 289V320M823.5 292V319M824.5 294V318M825.5 294V318M826.5 294V318M827.5 293V318M828.5 294V319M829.5 294V320M830.5 292V320M831.5 291V319M832.5 292V321M833.5 292V322M834.5 292V323M835.5 290V321M836.5 291V320M837.5 290V320M838.5 291V321M839.5 290V321M840.5 288V321M841.5 289V322M842.5 289V322M843.5 289V322M844.5 291V321M845.5 289V324M846.5 292V321M847.5 293V320M848.5 294V320M849.5 293V319M850.5 293V319M851.5 294V323M852.5 293V319M853.5 292V320M854.5 291V320M855.5 292V321M856.5 291V320M857.5 292V319M858.5 288V321M859.5 293V321M860.5 293V319M861.5 293V322M862.5 292V320M863.5 292V321M864.5 288V320M865.5 288V321M866.5 292V322M867.5 290V320M868.5 291V321M869.5 289V322M870.5 291V327M871.5 290V322M872.5 287V321M873.5 291V321M874.5 290V322M875.5 291V321M876.5 290V324M877.5 290V320M878.5 292V320M879.5 293V320M880.5 292V320M881.5 293V318M882.5 295V316M883.5 297V315M884.5 305V307M885.5 305V307M886.5 301V312M887.5 300V311M888.5 298V312M889.5 296V317M890.5 298V313M891.5 299V313M892.5 300V313M893.5 299V314M894.5 297V312M895.5 299V314M896.5 296V312M897.5 300V313M898.5 299V315M899.5 301V311M900.5 300V310M901.5 301V311M902.5 301V312M903.5 300V315M904.5 302V310M905.5 301V310M906.5 301V311M907.5 301V310M908.5 303V310M909.5 302V311M910.5 300V309M911.5 303V309M912.5 303V308M913.5 304V307M914.5 305V307M915.5 305V307M916.5 305V307M917.5 305V307M918.5 305V307M919.5 305V307M920.5 305V307M921.5 298V314M922.5 297V314M923.5 298V315M924.5 296V316M925.5 296V318M926.5 295V317M927.5 295V317M928.5 296V318M929.5 296V317M930.5 295V317M931.5 295V318M932.5 295V317M933.5 294V316M934.5 296V318M935.5 292V317M936.5 295V318M937.5 295V318M938.5 293V317M939.5 293V317M940.5 290V321M941.5 293V317M942.5 294V319M943.5 292V318M944.5 292V320M945.5 293V319M946.5 292V318M947.5 292V318M948.5 294V320M949.5 292V319M950.5 289V319M951.5 293V319M952.5 288V320M953.5 293V321M954.5 293V323M955.5 292V320M956.5 292V320M957.5 294V320M958.5 293V321M959.5 292V319M960.5 292V320M961.5 291V320M962.5 293V319M963.5 293V320M964.5 290V321M965.5 290V320M966.5 291V321M967.5 291V320M968.5 290V323M969.5 290V320M970.5 288V322M971.5 290V323M972.5 289V321M973.5 291V321M974.5 292V322M975.5 291V322M976.5 287V321M977.5 291V321M978.5 287V320M979.5 290V323M980.5 285V321M981.5 291V321M982.5 290V323M983.5 290V321M984.5 289V321M985.5 291V321M986.5 289V322M987.5 291V321M988.5 290V323M989.5 291V321M990.5 292V320M991.5 293V320M992.5 293V319M993.5 293V318M994.5 288V319M995.5 292V319M996.5 289V320M997.5 293V319M998.5 292V319M999.5 291V320M1000.5 292V319M1001.5 292V321M1002.5 291V321M1003.5 290V321M1004.5 292V320M1005.5 292V321M1006.5 291V321M1007.5 291V321M1008.5 291V324M1009.5 289V322M1010.5 290V321M1011.5 290V322M1012.5 288V322M1013.5 291V322M1014.5 290V322M1015.5 291V321M1016.5 292V322M1017.5 290V325M1018.5 291V323M1019.5 287V324M1020.5 290V323M1021.5 289V323M1022.5 292V321M1023.5 291V322M1024.5 291V319M1025.5 291V321M1026.5 294V319M1027.5 292V318M1028.5 292V317M1029.5 295V317M1030.5 294V318M1031.5 295V318M1032.5 294V318M1033.5 293V319M1034.5 295V320M1035.5 294V319M1036.5 292V318M1037.5 294V319M1038.5 293V320M1039.5 295V320M1040.5 294V324M1041.5 292V321M1042.5 290V320M1043.5 289V322M1044.5 292V321M1045.5 291V321M1046.5 291V322M1047.5 289V324M1048.5 290V323M1049.5 289V323M1050.5 289V323M1051.5 290V322M1052.5 291V320M1053.5 290V320M1054.5 292V320M1055.5 293V320M1056.5 294V319M1057.5 305V319M1058.5 305V307M1059.5 305V307M1060.5 305V307M1061.5 305V307M1062.5 302V311M1063.5 299V313M1064.5 299V315M1065.5 298V319M1066.5 295V318M1067.5 293V321M1068.5 293V321M1069.5 290V321M1070.5 289V323M1071.5 290V322M1072.5 287V324M1073.5 288V323M1074.5 286V325M1075.5 288V324M1076.5 289V323M1077.5 289V325M1078.5 288V323M1079.5 289V323M1080.5 289V323M1081.5 289V323M1082.5 289V322M1083.5 291V323M1084.5 289V322M1085.5 287V322M1086.5 289V321M1087.5 286V322M1088.5 289V322M1089.5 290V322M1090.5 290V321M1091.5 290V323M1092.5 291V322M1093.5 291V322M1094.5 291V322M1095.5 290V322M1096.5 289V322M1097.5 290V322M1098.5 291V322M1099.5 291V323M1100.5 289V322M1101.5 289V323M1102.5 291V321M1103.5 291V321M1104.5 290V324M1105.5 289V321M1106.5 290V323M1107.5 289V321M1108.5 288V322M1109.5 289V324M1110.5 290V323M1111.5 289V322M1112.5 288V322M1113.5 288V324M1114.5 290V323M1115.5 287V323M1116.5 287V323M1117.5 288V324M1118.5 288V323M1119.5 287V322M1120.5 290V323M1121.5 289V323M1122.5 286V322M1123.5 291V322M1124.5 290V323M137.5 630V649M138.5 632V650M139.5 631V653M140.5 631V651M141.5 633V650M142.5 632V650M143.5 631V652M144.5 631V651M145.5 629V655M146.5 633V649M147.5 630V649M148.5 633V651M149.5 632V651M150.5 632V649M151.5 633V650M152.5 632V652M153.5 632V650M154.5 632V650M155.5 631V649M156.5 632V649M157.5 633V649M158.5 631V649M159.5 632V653M160.5 631V651M161.5 632V651M162.5 629V653M163.5 630V653M164.5 628V653M165.5 627V653M166.5 628V656M167.5 626V654M168.5 627V655M169.5 628V655M170.5 627V655M171.5 627V654M172.5 626V654M173.5 626V655M174.5 626V657M175.5 629V654M176.5 624V654M177.5 629V654M178.5 628V654M179.5 630V655M180.5 628V654M181.5 630V654M182.5 630V651M183.5 630V653M184.5 631V650M185.5 631V652M186.5 631V652M187.5 629V651M188.5 629V652M189.5 627V652M190.5 629V653M191.5 629V652M192.5 629V654M193.5 627V655M194.5 629V654M195.5 627V654M196.5 628V654M197.5 627V655M198.5 626V656M199.5 628V654M200.5 627V654M201.5 626V655M202.5 627V655M203.5 625V658M204.5 625V657M205.5 624V658M206.5 624V660M207.5 623V659M208.5 625V660M209.5 624V659M210.5 622V659M211.5 622V659M212.5 623V660M213.5 622V658M214.5 623V659M215.5 623V660M216.5 623V664M217.5 620V660M218.5 622V660M219.5 620V661M220.5 622V661M221.5 618V664M222.5 621V661M223.5 621V659M224.5 623V662M225.5 623V660M226.5 623V658M227.5 626V658M228.5 625V657M229.5 624V660M230.5 625V658M231.5 625V656M232.5 625V656M233.5 626V657M234.5 626V655M235.5 627V657M236.5 626V657M237.5 625V657M238.5 626V655M239.5 625V658M240.5 624V658M241.5 625V656M242.5 626V656M243.5 624V659M244.5 622V656M245.5 625V658M246.5 623V657M247.5 623V657M248.5 624V659M249.5 623V658M250.5 625V658M251.5 624V659M252.5 624V656M253.5 625V658M254.5 626V656M255.5 626V660M256.5 624V657M257.5 627V656M258.5 625V658M259.5 625V655M260.5 624V658M261.5 627V655M262.5 624V656M263.5 625V656M264.5 640V642M265.5 640V642M266.5 640V642M267.5 640V642M268.5 637V647M269.5 637V647M270.5 634V647M271.5 637V646M272.5 635V646M273.5 634V648M274.5 635V647M275.5 633V647M276.5 636V648M277.5 636V648M278.5 635V647M279.5 635V646M280.5 637V648M281.5 635V647M282.5 636V646M283.5 637V645M284.5 632V649M285.5 636V647M286.5 637V646M287.5 635V645M288.5 636V645M289.5 638V646M290.5 639V644M291.5 639V644M292.5 638V645M293.5 636V646M294.5 636V647M295.5 634V646M296.5 633V647M297.5 634V648M298.5 630V650M299.5 633V651M300.5 633V650M301.5 632V649M302.5 630V649M303.5 631V649M304.5 632V649M305.5 632V651M306.5 631V650M307.5 633V651M308.5 631V651M309.5 631V651M310.5 631V652M311.5 632V652M312.5 630V652M313.5 630V651M314.5 630V654M315.5 630V651M316.5 625V652M317.5 630V652M318.5 631V652M319.5 631V651M320.5 630V651M321.5 630V651M322.5 630V655M323.5 629V653M324.5 630V652M325.5 629V653M326.5 630V654M327.5 628V653M328.5 629V653M329.5 627V654M330.5 629V652M331.5 629V652M332.5 628V654M333.5 625V653M334.5 628V652M335.5 628V654M336.5 629V652M337.5 629V656M338.5 630V654M339.5 630V653M340.5 628V654M341.5 628V652M342.5 630V653M343.5 624V653M344.5 628V653M345.5 629V653M346.5 627V655M347.5 629V655M348.5 629V654M349.5 627V659M350.5 627V658M351.5 627V656M352.5 629V657M353.5 628V654M354.5 629V654M355.5 628V653M356.5 627V654M357.5 625V655M358.5 629V654M359.5 628V655M360.5 628V654M361.5 628V655M362.5 628V656M363.5 625V658M364.5 628V655M365.5 628V655M366.5 627V656M367.5 628V654M368.5 627V655M369.5 626V655M370.5 626V656M371.5 629V654M372.5 627V655M373.5 627V654M374.5 628V653M375.5 627V655M376.5 627V653M377.5 628V653M378.5 628V653M379.5 628V653M380.5 628V654M381.5 624V655M382.5 627V655M383.5 627V656M384.5 626V660M385.5 628V657M386.5 625V654M387.5 626V656M388.5 626V655M389.5 626V655M390.5 627V655M391.5 625V656M392.5 626V656M393.5 626V656M394.5 626V655M395.5 625V656M396.5 627V656M397.5 625V655M398.5 626V656M399.5 626V660M400.5 628V654M401.5 626V655M402.5 627V656M403.5 627V654M404.5 625V657M405.5 627V656M406.5 626V654M407.5 628V656M408.5 627V655M409.5 627V654M410.5 629V655M411.5 627V654M412.5 629V652M413.5 626V655M414.5 628V653M415.5 628V654M416.5 628V655M417.5 629V657M418.5 640V642M419.5 640V642M420.5 640V642M421.5 640V642M422.5 640V642M423.5 640V642M424.5 640V642M425.5 640V642M426.5 640V642M427.5 640V642M428.5 640V642M429.5 630V652M430.5 629V653M431.5 629V654M432.5 629V653M433.5 629V655M434.5 628V655M435.5 629V655M436.5 628V655M437.5 628V659M438.5 627V655M439.5 626V656M440.5 626V656M441.5 626V656M442.5 626V656M443.5 622V658M444.5 624V656M445.5 625V657M446.5 625V657M447.5 624V658M448.5 624V656M449.5 625V656M450.5 626V657M451.5 626V656M452.5 627V655M453.5 627V655M454.5 627V655M455.5 624V655M456.5 627V655M457.5 625V654M458.5 626V656M459.5 626V656M460.5 626V656M461.5 626V655M462.5 626V655M463.5 628V654M464.5 627V655M465.5 627V656M466.5 627V656M467.5 625V656M468.5 626V656M469.5 625V655M470.5 626V657M471.5 624V655M472.5 624V657M473.5 622V658M474.5 624V658M475.5 625V658M476.5 624V657M477.5 622V658M478.5 625V658M479.5 624V657M480.5 622V659M481.5 626V657M482.5 625V658M483.5 626V662M484.5 626V657M485.5 625V658M486.5 626V656M487.5 625V656M488.5 626V657M489.5 622V656M490.5 625V657M491.5 627V656M492.5 627V654M493.5 627V656M494.5 628V656M495.5 626V654M496.5 626V655M497.5 626V654M498.5 627V654M499.5 626V656M500.5 624V655M501.5 627V654M502.5 626V655M503.5 627V656M504.5 627V654M505.5 627V656M506.5 627V656M507.5 627V655M508.5 626V656M509.5 626V659M510.5 626V656M511.5 626V655M512.5 622V657M513.5 625V657M514.5 627V657M515.5 626V657M516.5 625V657M517.5 625V656M518.5 627V655M519.5 626V657M520.5 626V657M521.5 625V656M522.5 627V655M523.5 625V655M524.5 626V655M525.5 625V657M526.5 628V656M527.5 626V655M528.5 628V658M529.5 625V657M530.5 627V654M531.5 626V654M532.5 627V655M533.5 626V656M534.5 626V655M535.5 625V655M536.5 628V654M537.5 628V654M538.5 626V652M539.5 630V650M540.5 632V651M541.5 635V647M542.5 640V642M543.5 640V642M544.5 636V645M545.5 635V648M546.5 633V649M547.5 632V649M548.5 632V651M549.5 628V654M550.5 628V651M551.5 628V656M552.5 628V653M553.5 625V655M554.5 627V653M555.5 626V654M556.5 627V656M557.5 627V656M558.5 626V655M559.5 627V655M560.5 626V654M561.5 625V655M562.5 626V655M563.5 625V656M564.5 627V659M565.5 624V656M566.5 626V659M567.5 624V658M568.5 624V656M569.5 625V658M570.5 625V657M571.5 623V658M572.5 623V658M573.5 623V657M574.5 623V658M575.5 624V656M576.5 624V658M577.5 624V656M578.5 627V657M579.5 625V658M580.5 622V656M581.5 627V656M582.5 625V657M583.5 625V656M584.5 626V657M585.5 626V657M586.5 627V656M587.5 627V656M588.5 623V656M589.5 626V655M590.5 624V657M591.5 625V657M592.5 624V659M593.5 624V657M594.5 624V658M595.5 623V659M596.5 624V657M597.5 625V658M598.5 622V659M599.5 626V659M600.5 624V659M601.5 626V655M602.5 627V654M603.5 629V654M604.5 627V655M605.5 629V654M606.5 630V653M607.5 640V652M608.5 640V642M609.5 640V642M610.5 628V654M611.5 626V655M612.5 627V657M613.5 627V655M614.5 627V660M615.5 626V657M616.5 625V655M617.5 626V656M618.5 627V655M619.5 623V656M620.5 626V656M621.5 627V656M622.5 625V657M623.5 625V657M624.5 625V656M625.5 626V656M626.5 628V655M627.5 629V656M628.5 628V655M629.5 626V656M630.5 626V654M631.5 627V654M632.5 627V656M633.5 627V655M634.5 626V655M635.5 626V656M636.5 626V655M637.5 627V655M638.5 627V657M639.5 628V656M640.5 626V656M641.5 626V654M642.5 626V655M643.5 628V655M644.5 628V655M645.5 626V655M646.5 626V655M647.5 626V655M648.5 625V654M649.5 629V654M650.5 629V657M651.5 629V654M652.5 628V655M653.5 629V653M654.5 632V651M655.5 630V650M656.5 640V642M657.5 632V651M658.5 628V651M659.5 629V651M660.5 630V652M661.5 630V654M662.5 629V655M663.5 628V657M664.5 628V654M665.5 626V655M666.5 628V660M667.5 627V656M668.5 625V655M669.5 627V657M670.5 626V656M671.5 627V656M672.5 627V657M673.5 623V656M674.5 625V656M675.5 625V656M676.5 624V657M677.5 625V657M678.5 621V656M679.5 624V657M680.5 626V658M681.5 626V658M682.5 626V656M683.5 626V657M684.5 624V657M685.5 625V657M686.5 625V657M687.5 624V657M688.5 625V658M689.5 626V658M690.5 625V659M691.5 625V657M692.5 623V658M693.5 626V657M694.5 624V658M695.5 624V657M696.5 626V661M697.5 626V658M698.5 625V658M699.5 624V658M700.5 624V658M701.5 624V660M702.5 624V658M703.5 624V658M704.5 624V658M705.5 626V657M706.5 625V655M707.5 626V656M708.5 624V660M709.5 626V657M710.5 623V657M711.5 624V658M712.5 623V659M713.5 623V660M714.5 622V661M715.5 622V661M716.5 623V659M717.5 623V660M718.5 623V659M719.5 622V659M720.5 623V657M721.5 624V660M722.5 625V658M723.5 624V658M724.5 624V658M725.5 626V656M726.5 623V656M727.5 623V655M728.5 627V654M729.5 628V655M730.5 626V653M731.5 630V654M732.5 628V652M733.5 627V654M734.5 630V654M735.5 629V654M736.5 629V653M737.5 628V654M738.5 628V652M739.5 630V654M740.5 631V652M741.5 632V653M742.5 631V650M743.5 635V649M744.5 636V645M745.5 640V642M746.5 638V642M747.5 640V642M748.5 637V645M749.5 632V648M750.5 633V649M751.5 630V651M752.5 629V652M753.5 630V651M754.5 629V654M755.5 629V653M756.5 629V655M757.5 629V654M758.5 629V653M759.5 629V655M760.5 629V653M761.5 628V655M762.5 627V654M763.5 628V655M764.5 627V655M765.5 626V654M766.5 627V655M767.5 627V655M768.5 625V656M769.5 626V658M770.5 625V658M771.5 624V659M772.5 624V658M773.5 625V656M774.5 625V661M775.5 625V658M776.5 624V657M777.5 624V660M778.5 624V657M779.5 626V655M780.5 627V656M781.5 627V655M782.5 627V655M783.5 623V655M784.5 626V659M785.5 626V657M786.5 627V657M787.5 624V655M788.5 625V657M789.5 625V656M790.5 625V656M791.5 626V658M792.5 624V657M793.5 625V657M794.5 626V656M795.5 625V657M796.5 625V657M797.5 624V656M798.5 622V657M799.5 626V656M800.5 624V656M801.5 624V657M802.5 626V657M803.5 625V656M804.5 623V657M805.5 626V656M806.5 623V657M807.5 624V659M808.5 624V658M809.5 625V659M810.5 625V660M811.5 624V656M812.5 626V658M813.5 626V657M814.5 627V657M815.5 627V656M816.5 626V655M817.5 625V654M818.5 625V654M819.5 628V658M820.5 627V655M821.5 626V656M822.5 624V655M823.5 627V654M824.5 629V653M825.5 629V653M826.5 629V653M827.5 628V653M828.5 629V654M829.5 629V655M830.5 627V655M831.5 626V654M832.5 627V656M833.5 627V657M834.5 627V658M835.5 625V656M836.5 626V655M837.5 625V655M838.5 626V656M839.5 625V656M840.5 623V656M841.5 624V657M842.5 624V657M843.5 624V657M844.5 626V656M845.5 624V659M846.5 627V656M847.5 628V655M848.5 629V655M849.5 628V654M850.5 628V654M851.5 629V658M852.5 628V654M853.5 627V655M854.5 626V655M855.5 627V656M856.5 626V655M857.5 627V654M858.5 623V656M859.5 628V656M860.5 628V654M861.5 628V657M862.5 627V655M863.5 627V656M864.5 623V655M865.5 623V656M866.5 627V657M867.5 625V655M868.5 626V656M869.5 624V657M870.5 626V662M871.5 625V657M872.5 622V656M873.5 626V656M874.5 625V657M875.5 626V656M876.5 625V659M877.5 625V655M878.5 627V655M879.5 628V655M880.5 627V655M881.5 628V653M882.5 630V651M883.5 632V650M884.5 640V642M885.5 640V642M886.5 636V647M887.5 635V646M888.5 633V647M889.5 631V652M890.5 633V648M891.5 634V648M892.5 635V648M893.5 634V649M894.5 632V647M895.5 634V649M896.5 631V647M897.5 635V648M898.5 634V650M899.5 636V646M900.5 635V645M901.5 636V646M902.5 636V647M903.5 635V650M904.5 637V645M905.5 636V645M906.5 636V646M907.5 636V645M908.5 638V645M909.5 637V646M910.5 635V644M911.5 638V644M912.5 638V643M913.5 639V642M914.5 640V642M915.5 640V642M916.5 640V642M917.5 640V642M918.5 640V642M919.5 640V642M920.5 640V642M921.5 633V649M922.5 632V649M923.5 633V650M924.5 631V651M925.5 631V653M926.5 630V652M927.5 630V652M928.5 631V653M929.5 631V652M930.5 630V652M931.5 630V653M932.5 630V652M933.5 629V651M934.5 631V653M935.5 627V652M936.5 630V653M937.5 630V653M938.5 628V652M939.5 628V652M940.5 625V656M941.5 628V652M942.5 629V654M943.5 627V653M944.5 627V655M945.5 628V654M946.5 627V653M947.5 627V653M948.5 629V655M949.5 627V654M950.5 624V654M951.5 628V654M952.5 623V655M953.5 628V656M954.5 628V658M955.5 627V655M956.5 627V655M957.5 629V655M958.5 628V656M959.5 627V654M960.5 627V655M961.5 626V655M962.5 628V654M963.5 628V655M964.5 625V656M965.5 625V655M966.5 626V656M967.5 626V655M968.5 625V658M969.5 625V655M970.5 623V657M971.5 625V658M972.5 624V656M973.5 626V656M974.5 627V657M975.5 626V657M976.5 622V656M977.5 626V656M978.5 622V655M979.5 625V658M980.5 620V656M981.5 626V656M982.5 625V658M983.5 625V656M984.5 624V656M985.5 626V656M986.5 624V657M987.5 626V656M988.5 625V658M989.5 626V656M990.5 627V655M991.5 628V655M992.5 628V654M993.5 628V653M994.5 623V654M995.5 627V654M996.5 624V655M997.5 628V654M998.5 627V654M999.5 626V655M1000.5 627V654M1001.5 627V656M1002.5 626V656M1003.5 625V656M1004.5 627V655M1005.5 627V656M1006.5 626V656M1007.5 626V656M1008.5 626V659M1009.5 624V657M1010.5 625V656M1011.5 625V657M1012.5 623V657M1013.5 626V657M1014.5 625V657M1015.5 626V656M1016.5 627V657M1017.5 625V660M1018.5 626V658M1019.5 622V659M1020.5 625V658M1021.5 624V658M1022.5 627V656M1023.5 626V657M1024.5 626V654M1025.5 626V656M1026.5 629V654M1027.5 627V653M1028.5 627V652M1029.5 630V652M1030.5 629V653M1031.5 630V653M1032.5 629V653M1033.5 628V654M1034.5 630V655M1035.5 629V654M1036.5 627V653M1037.5 629V654M1038.5 628V655M1039.5 630V655M1040.5 629V659M1041.5 627V656M1042.5 625V655M1043.5 624V657M1044.5 627V656M1045.5 626V656M1046.5 626V657M1047.5 624V659M1048.5 625V658M1049.5 624V658M1050.5 624V658M1051.5 625V657M1052.5 626V655M1053.5 625V655M1054.5 627V655M1055.5 628V655M1056.5 629V654M1057.5 640V654M1058.5 640V642M1059.5 640V642M1060.5 640V642M1061.5 640V642M1062.5 637V646M1063.5 634V648M1064.5 634V650M1065.5 633V654M1066.5 630V653M1067.5 628V656M1068.5 628V656M1069.5 625V656M1070.5 624V658M1071.5 625V657M1072.5 622V659M1073.5 623V658M1074.5 621V660M1075.5 623V659M1076.5 624V658M1077.5 624V660M1078.5 623V658M1079.5 624V658M1080.5 624V658M1081.5 624V658M1082.5 624V657M1083.5 626V658M1084.5 624V657M1085.5 622V657M1086.5 624V656M1087.5 621V657M1088.5 624V657M1089.5 625V657M1090.5 625V656M1091.5 625V658M1092.5 626V657M1093.5 626V657M1094.5 626V657M1095.5 625V657M1096.5 624V657M1097.5 625V657M1098.5 626V657M1099.5 626V658M1100.5 624V657M1101.5 624V658M1102.5 626V656M1103.5 626V656M1104.5 625V659M1105.5 624V656M1106.5 625V658M1107.5 624V656M1108.5 623V657M1109.5 624V659M1110.5 625V658M1111.5 624V657M1112.5 623V657M1113.5 623V659M1114.5 625V658M1115.5 622V658M1116.5 622V658M1117.5 623V659M1118.5 623V658M1119.5 622V657M1120.5 625V658M1121.5 624V658M1122.5 621V657M1123.5 626V657M1124.5 625V658" stroke="#6464dc" stroke-width="1" fill="none"/></svg><div class="a" style="left:1124px;top:142px;width:1px;height:328px;background:#3a3a3a"></div><div class="a" style="left:1124px;top:477px;width:1px;height:328px;background:#3a3a3a"></div><div class="t" style="left:88.500px;width:42px;text-align:right;top:145.39999999999998px;font-size:11.800px;font-weight:bold;">1.0</div><div class="t" style="left:88.500px;width:42px;text-align:right;top:170.79999999999998px;font-size:11.800px;">0.8</div><div class="t" style="left:88.500px;width:42px;text-align:right;top:203.39999999999998px;font-size:11.800px;">0.6</div><div class="t" style="left:88.500px;width:42px;text-align:right;top:219.7px;font-size:11.800px;font-weight:bold;">0.5</div><div class="t" style="left:88.500px;width:42px;text-align:right;top:252.3px;font-size:11.800px;">0.3</div><div class="t" style="left:88.500px;width:42px;text-align:right;top:268.59999999999997px;font-size:11.800px;">0.2</div><div class="t" style="left:88.500px;width:42px;text-align:right;top:301.2px;font-size:11.800px;font-weight:bold;">0.0</div><div class="t" style="left:88.500px;width:42px;text-align:right;top:333.8px;font-size:11.800px;">-0.2</div><div class="t" style="left:88.500px;width:42px;text-align:right;top:350.09999999999997px;font-size:11.800px;">-0.3</div><div class="t" style="left:88.500px;width:42px;text-align:right;top:382.7px;font-size:11.800px;font-weight:bold;">-0.5</div><div class="t" style="left:88.500px;width:42px;text-align:right;top:399.0px;font-size:11.800px;">-0.6</div><div class="t" style="left:88.500px;width:42px;text-align:right;top:431.59999999999997px;font-size:11.800px;">-0.8</div><div class="t" style="left:88.500px;width:42px;text-align:right;top:457.4px;font-size:11.800px;font-weight:bold;">-1.0</div><div class="a" style="left:133px;top:452px;width:2px;height:1px;background:#000"></div><div class="a" style="left:133px;top:436px;width:2px;height:1px;background:#000"></div><div class="a" style="left:133px;top:419px;width:2px;height:1px;background:#000"></div><div class="a" style="left:133px;top:403px;width:2px;height:1px;background:#000"></div><div class="a" style="left:131px;top:387px;width:4px;height:1px;background:#000"></div><div class="a" style="left:133px;top:370px;width:2px;height:1px;background:#000"></div><div class="a" style="left:133px;top:354px;width:2px;height:1px;background:#000"></div><div class="a" style="left:133px;top:338px;width:2px;height:1px;background:#000"></div><div class="a" style="left:133px;top:321px;width:2px;height:1px;background:#000"></div><div class="a" style="left:131px;top:305px;width:4px;height:1px;background:#000"></div><div class="a" style="left:133px;top:289px;width:2px;height:1px;background:#000"></div><div class="a" style="left:133px;top:272px;width:2px;height:1px;background:#000"></div><div class="a" style="left:133px;top:256px;width:2px;height:1px;background:#000"></div><div class="a" style="left:133px;top:240px;width:2px;height:1px;background:#000"></div><div class="a" style="left:131px;top:224px;width:4px;height:1px;background:#000"></div><div class="a" style="left:133px;top:207px;width:2px;height:1px;background:#000"></div><div class="a" style="left:133px;top:191px;width:2px;height:1px;background:#000"></div><div class="a" style="left:133px;top:175px;width:2px;height:1px;background:#000"></div><div class="a" style="left:133px;top:158px;width:2px;height:1px;background:#000"></div><div class="t" style="left:88.500px;width:42px;text-align:right;top:480.4px;font-size:11.800px;font-weight:bold;">1.0</div><div class="t" style="left:88.500px;width:42px;text-align:right;top:505.8px;font-size:11.800px;">0.8</div><div class="t" style="left:88.500px;width:42px;text-align:right;top:538.4000000000001px;font-size:11.800px;">0.6</div><div class="t" style="left:88.500px;width:42px;text-align:right;top:554.7px;font-size:11.800px;font-weight:bold;">0.5</div><div class="t" style="left:88.500px;width:42px;text-align:right;top:587.3000000000001px;font-size:11.800px;">0.3</div><div class="t" style="left:88.500px;width:42px;text-align:right;top:603.6px;font-size:11.800px;">0.2</div><div class="t" style="left:88.500px;width:42px;text-align:right;top:636.2px;font-size:11.800px;font-weight:bold;">0.0</div><div class="t" style="left:88.500px;width:42px;text-align:right;top:668.8000000000001px;font-size:11.800px;">-0.2</div><div class="t" style="left:88.500px;width:42px;text-align:right;top:685.1px;font-size:11.800px;">-0.3</div><div class="t" style="left:88.500px;width:42px;text-align:right;top:717.7px;font-size:11.800px;font-weight:bold;">-0.5</div><div class="t" style="left:88.500px;width:42px;text-align:right;top:734.0px;font-size:11.800px;">-0.6</div><div class="t" style="left:88.500px;width:42px;text-align:right;top:766.6px;font-size:11.800px;">-0.8</div><div class="t" style="left:88.500px;width:42px;text-align:right;top:792.4000000000001px;font-size:11.800px;font-weight:bold;">-1.0</div><div class="a" style="left:133px;top:787px;width:2px;height:1px;background:#000"></div><div class="a" style="left:133px;top:770px;width:2px;height:1px;background:#000"></div><div class="a" style="left:133px;top:754px;width:2px;height:1px;background:#000"></div><div class="a" style="left:133px;top:738px;width:2px;height:1px;background:#000"></div><div class="a" style="left:131px;top:722px;width:4px;height:1px;background:#000"></div><div class="a" style="left:133px;top:705px;width:2px;height:1px;background:#000"></div><div class="a" style="left:133px;top:689px;width:2px;height:1px;background:#000"></div><div class="a" style="left:133px;top:673px;width:2px;height:1px;background:#000"></div><div class="a" style="left:133px;top:656px;width:2px;height:1px;background:#000"></div><div class="a" style="left:131px;top:640px;width:4px;height:1px;background:#000"></div><div class="a" style="left:133px;top:624px;width:2px;height:1px;background:#000"></div><div class="a" style="left:133px;top:608px;width:2px;height:1px;background:#000"></div><div class="a" style="left:133px;top:591px;width:2px;height:1px;background:#000"></div><div class="a" style="left:133px;top:575px;width:2px;height:1px;background:#000"></div><div class="a" style="left:131px;top:559px;width:4px;height:1px;background:#000"></div><div class="a" style="left:133px;top:542px;width:2px;height:1px;background:#000"></div><div class="a" style="left:133px;top:526px;width:2px;height:1px;background:#000"></div><div class="a" style="left:133px;top:510px;width:2px;height:1px;background:#000"></div><div class="a" style="left:133px;top:493px;width:2px;height:1px;background:#000"></div><div class="a" style="left:5px;top:142px;width:15px;height:15px;border:1px solid #8c8c8c;border-top-color:#fff;border-left-color:#fff"></div><div class="a" style="left:20px;top:142px;width:80px;height:15px;border:1px solid #8c8c8c;border-top-color:#fff;border-left-color:#fff"></div><div class="a" style="left:5px;top:157px;width:95px;height:1px;background:#8c8c8c"></div><svg class="a" style="left:5px;top:142px" width="95" height="16" viewBox="5 142 95 16"><path d="M9 145.500l8 8M17 145.500l-8 8" stroke="#000" stroke-width="1.300"/><path d="M85 146h11l-5.500 6z" fill="#000"/></svg><div class="t" style="left:23.500px;top:144px;font-size:9.500px">160406-000</div><div class="t" style="left:8px;top:160px;font-size:9.500px">Stereo, 44100Hz</div><div class="t" style="left:8px;top:175.500px;font-size:9.500px">32-bit float</div><div class="a" style="left:5px;top:191px;width:95px;height:1px;background:#8c8c8c"></div><div class="a" style="left:5px;top:192px;width:47px;height:14px;border:1px solid #8c8c8c;border-top-color:#fff;border-left-color:#fff"></div><div class="a" style="left:53px;top:192px;width:47px;height:14px;border:1px solid #8c8c8c;border-top-color:#fff;border-left-color:#fff"></div><div class="a" style="left:5px;top:206px;width:95px;height:1px;background:#8c8c8c"></div><div class="t" style="left:5px;width:47px;text-align:center;top:193px;font-size:9.500px">Mute</div><div class="t" style="left:53px;width:47px;text-align:center;top:193px;font-size:9.500px">Solo</div><div class="a" style="left:16px;top:227px;width:76px;height:1px;background:#8e8e8e"></div><div class="a" style="left:16px;top:228px;width:76px;height:1px;background:#f4f4f8"></div><div class="a" style="left:17px;top:222px;width:1px;height:5px;background:#f0f0f6"></div><div class="a" style="left:18px;top:222px;width:1px;height:5px;background:#a4a4b0"></div><div class="a" style="left:24px;top:222px;width:1px;height:5px;background:#f0f0f6"></div><div class="a" style="left:25px;top:222px;width:1px;height:5px;background:#a4a4b0"></div><div class="a" style="left:31px;top:222px;width:1px;height:5px;background:#f0f0f6"></div><div class="a" style="left:32px;top:222px;width:1px;height:5px;background:#a4a4b0"></div><div class="a" style="left:38px;top:222px;width:1px;height:5px;background:#f0f0f6"></div><div class="a" style="left:39px;top:222px;width:1px;height:5px;background:#a4a4b0"></div><div class="a" style="left:46px;top:222px;width:1px;height:5px;background:#f0f0f6"></div><div class="a" style="left:47px;top:222px;width:1px;height:5px;background:#a4a4b0"></div><div class="a" style="left:53px;top:222px;width:1px;height:5px;background:#f0f0f6"></div><div class="a" style="left:54px;top:222px;width:1px;height:5px;background:#a4a4b0"></div><div class="a" style="left:60px;top:222px;width:1px;height:5px;background:#f0f0f6"></div><div class="a" style="left:61px;top:222px;width:1px;height:5px;background:#a4a4b0"></div><div class="a" style="left:67px;top:222px;width:1px;height:5px;background:#f0f0f6"></div><div class="a" style="left:68px;top:222px;width:1px;height:5px;background:#a4a4b0"></div><div class="a" style="left:74px;top:222px;width:1px;height:5px;background:#f0f0f6"></div><div class="a" style="left:75px;top:222px;width:1px;height:5px;background:#a4a4b0"></div><div class="a" style="left:82px;top:222px;width:1px;height:5px;background:#f0f0f6"></div><div class="a" style="left:83px;top:222px;width:1px;height:5px;background:#a4a4b0"></div><div class="a" style="left:89px;top:222px;width:1px;height:5px;background:#f0f0f6"></div><div class="a" style="left:90px;top:222px;width:1px;height:5px;background:#a4a4b0"></div><svg class="a" style="left:46px;top:219px" width="13" height="17" viewBox="0 0 13 17"><path d="M1.500 3.500q0-2.500 2.500-2.500h5q2.500 0 2.500 2.500v6l-5 5.500-5-5.500z" fill="#dcdcee" stroke="#2c2c3c" stroke-width="1"/><path d="M4.500 5.500h4M4.500 7.500h4M4.500 9.500h4" stroke="#8c8cc8" stroke-width="1"/></svg><div class="a" style="left:16px;top:257px;width:76px;height:1px;background:#8e8e8e"></div><div class="a" style="left:16px;top:258px;width:76px;height:1px;background:#f4f4f8"></div><div class="a" style="left:17px;top:252px;width:1px;height:5px;background:#f0f0f6"></div><div class="a" style="left:18px;top:252px;width:1px;height:5px;background:#a4a4b0"></div><div class="a" style="left:24px;top:252px;width:1px;height:5px;background:#f0f0f6"></div><div class="a" style="left:25px;top:252px;width:1px;height:5px;background:#a4a4b0"></div><div class="a" style="left:31px;top:252px;width:1px;height:5px;background:#f0f0f6"></div><div class="a" style="left:32px;top:252px;width:1px;height:5px;background:#a4a4b0"></div><div class="a" style="left:38px;top:252px;width:1px;height:5px;background:#f0f0f6"></div><div class="a" style="left:39px;top:252px;width:1px;height:5px;background:#a4a4b0"></div><div class="a" style="left:46px;top:252px;width:1px;height:5px;background:#f0f0f6"></div><div class="a" style="left:47px;top:252px;width:1px;height:5px;background:#a4a4b0"></div><div class="a" style="left:53px;top:252px;width:1px;height:5px;background:#f0f0f6"></div><div class="a" style="left:54px;top:252px;width:1px;height:5px;background:#a4a4b0"></div><div class="a" style="left:60px;top:252px;width:1px;height:5px;background:#f0f0f6"></div><div class="a" style="left:61px;top:252px;width:1px;height:5px;background:#a4a4b0"></div><div class="a" style="left:67px;top:252px;width:1px;height:5px;background:#f0f0f6"></div><div class="a" style="left:68px;top:252px;width:1px;height:5px;background:#a4a4b0"></div><div class="a" style="left:74px;top:252px;width:1px;height:5px;background:#f0f0f6"></div><div class="a" style="left:75px;top:252px;width:1px;height:5px;background:#a4a4b0"></div><div class="a" style="left:82px;top:252px;width:1px;height:5px;background:#f0f0f6"></div><div class="a" style="left:83px;top:252px;width:1px;height:5px;background:#a4a4b0"></div><div class="a" style="left:89px;top:252px;width:1px;height:5px;background:#f0f0f6"></div><div class="a" style="left:90px;top:252px;width:1px;height:5px;background:#a4a4b0"></div><svg class="a" style="left:46px;top:249px" width="13" height="17" viewBox="0 0 13 17"><path d="M1.500 3.500q0-2.500 2.500-2.500h5q2.500 0 2.500 2.500v6l-5 5.500-5-5.500z" fill="#dcdcee" stroke="#2c2c3c" stroke-width="1"/><path d="M4.500 5.500h4M4.500 7.500h4M4.500 9.500h4" stroke="#8c8cc8" stroke-width="1"/></svg><div class="a" style="left:16px;top:217px;width:5px;height:1px;background:#000"></div><div class="a" style="left:84px;top:217px;width:5px;height:1px;background:#000"></div><div class="a" style="left:86px;top:215px;width:1px;height:5px;background:#000"></div><div class="t" style="left:16px;top:242.500px;font-size:12px">L</div><div class="t" style="left:83.500px;top:242.500px;font-size:12px">R</div><div class="a" style="left:23px;top:788px;width:62px;height:16px;border:1px solid #8c8c8c;border-top-color:#fff;border-left-color:#fff;border-bottom:none"></div><svg class="a" style="left:47px;top:793px" width="14" height="8" viewBox="0 0 14 8"><path d="M2 6.500h10.500l-5.250-5.500z" fill="#9c9cac" stroke="#1c1c1c" stroke-width="1"/></svg><svg class="a" style="left:85px;top:788px" width="14" height="15" viewBox="0 0 14 15"><circle cx="7.300" cy="8" r="5" fill="#fff" stroke="#000" stroke-width="1"/><path d="M7.300 1.500v2" stroke="#000" stroke-width="1.800"/><path d="M5.500 5l1.800 3 2.200-1.500" stroke="#3232c8" stroke-width="1" fill="none"/></svg><div class="a" style="left:1px;top:808px;width:1278px;height:108px;background:#ffff80;border:1px solid #c4c47c"></div><div class="a" style="left:4px;top:811px;width:1272px;height:102px;background:#000"></div><div class="a" style="left:5px;top:812px;width:95px;height:99px;background:#c8c8d7"></div><div class="a" style="left:101px;top:812px;width:36px;height:99px;background:#c8c8d7"></div><div class="a" style="left:137px;top:812px;width:1137px;height:99px;background:#c0c0c0"></div><div class="a" style="left:5px;top:812px;width:15px;height:15px;border:1px solid #8c8c8c;border-top-color:#fff;border-left-color:#fff"></div><div class="a" style="left:20px;top:812px;width:80px;height:15px;border:1px solid #8c8c8c;border-top-color:#fff;border-left-color:#fff"></div><div class="a" style="left:5px;top:827px;width:95px;height:1px;background:#8c8c8c"></div><svg class="a" style="left:5px;top:812px" width="95" height="16" viewBox="5 812 95 16"><path d="M9 815.500l8 8M17 815.500l-8 8" stroke="#000" stroke-width="1.300"/><path d="M85 816h11l-5.500 6z" fill="#000"/></svg><div class="t" style="left:23.500px;top:814px;font-size:9.500px">Label Track</div><div class="a" style="left:23px;top:894px;width:62px;height:16px;border:1px solid #8c8c8c;border-top-color:#fff;border-left-color:#fff;border-bottom:none"></div><svg class="a" style="left:47px;top:899px" width="14" height="8" viewBox="0 0 14 8"><path d="M2 6.500h10.500l-5.250-5.500z" fill="#9c9cac" stroke="#1c1c1c" stroke-width="1"/></svg><svg class="a" style="left:85px;top:894px" width="14" height="15" viewBox="0 0 14 15"><circle cx="7.300" cy="8" r="5" fill="#fff" stroke="#000" stroke-width="1"/><path d="M7.300 1.500v2" stroke="#000" stroke-width="1.800"/><path d="M5.500 5l1.800 3 2.200-1.500" stroke="#3232c8" stroke-width="1" fill="none"/></svg><div class="a" style="left:137px;top:812px;width:1px;height:99px;background:#000"></div><div class="a" style="left:263px;top:812px;width:1px;height:99px;background:#000"></div><div class="a" style="left:267px;top:812px;width:1px;height:99px;background:#000"></div><div class="a" style="left:418px;top:812px;width:1px;height:99px;background:#000"></div><div class="a" style="left:429px;top:812px;width:1px;height:99px;background:#000"></div><div class="a" style="left:542px;top:812px;width:1px;height:99px;background:#000"></div><div class="a" style="left:544px;top:812px;width:1px;height:99px;background:#000"></div><div class="a" style="left:607px;top:812px;width:1px;height:99px;background:#000"></div><div class="a" style="left:609px;top:812px;width:1px;height:99px;background:#000"></div><div class="a" style="left:655px;top:812px;width:1px;height:99px;background:#000"></div><div class="a" style="left:749px;top:812px;width:1px;height:99px;background:#000"></div><div class="a" style="left:883px;top:812px;width:1px;height:99px;background:#000"></div><div class="a" style="left:923px;top:812px;width:1px;height:99px;background:#000"></div><div class="a" style="left:1056px;top:812px;width:1px;height:99px;background:#000"></div><div class="a" style="left:1064px;top:812px;width:1px;height:99px;background:#000"></div><div class="a" style="left:1124px;top:812px;width:1px;height:99px;background:#000"></div><svg class="a" style="left:137px;top:812px" width="1137" height="100" viewBox="137 812 1137 100"><path d="M137.5 827.0V848.0M263.5 827.0V848.0" stroke="#c0c0c0" stroke-width="1.400"/><path d="M146 837.5H255.5" stroke="#bebef0" stroke-width="1"/><path d="M146 838.5H255.5" stroke="#222" stroke-width="1"/><path d="M138.0 830.0Q143.0 834.0 143.2 837.5Q143.0 841.0 138.0 845.0" fill="none" stroke="#000" stroke-width="4.400"/><path d="M138.0 830.0Q143.0 834.0 143.2 837.5Q143.0 841.0 138.0 845.0" fill="none" stroke="#bebef0" stroke-width="2.400" stroke-linecap="square"/><circle cx="137.5" cy="837.2" r="3.900" fill="#bebef0" stroke="#000" stroke-width="1.100"/><path d="M263.0 830.0Q258.0 834.0 257.8 837.5Q258.0 841.0 263.0 845.0" fill="none" stroke="#000" stroke-width="4.400"/><path d="M263.0 830.0Q258.0 834.0 257.8 837.5Q258.0 841.0 263.0 845.0" fill="none" stroke="#bebef0" stroke-width="2.400" stroke-linecap="square"/><circle cx="263.5" cy="837.2" r="3.900" fill="#bebef0" stroke="#000" stroke-width="1.100"/><path d="M267.5 853.0V874.0M418.5 853.0V874.0" stroke="#c0c0c0" stroke-width="1.400"/><path d="M276 863.5H410.5" stroke="#bebef0" stroke-width="1"/><path d="M276 864.5H410.5" stroke="#222" stroke-width="1"/><path d="M268.0 856.0Q273.0 860.0 273.2 863.5Q273.0 867.0 268.0 871.0" fill="none" stroke="#000" stroke-width="4.400"/><path d="M268.0 856.0Q273.0 860.0 273.2 863.5Q273.0 867.0 268.0 871.0" fill="none" stroke="#bebef0" stroke-width="2.400" stroke-linecap="square"/><circle cx="267.5" cy="863.2" r="3.900" fill="#bebef0" stroke="#000" stroke-width="1.100"/><path d="M418.0 856.0Q413.0 860.0 412.8 863.5Q413.0 867.0 418.0 871.0" fill="none" stroke="#000" stroke-width="4.400"/><path d="M418.0 856.0Q413.0 860.0 412.8 863.5Q413.0 867.0 418.0 871.0" fill="none" stroke="#bebef0" stroke-width="2.400" stroke-linecap="square"/><circle cx="418.5" cy="863.2" r="3.900" fill="#bebef0" stroke="#000" stroke-width="1.100"/><path d="M429.5 827.0V848.0M542.5 827.0V848.0" stroke="#c0c0c0" stroke-width="1.400"/><path d="M438 837.5H534.5" stroke="#bebef0" stroke-width="1"/><path d="M438 838.5H534.5" stroke="#222" stroke-width="1"/><path d="M430.0 830.0Q435.0 834.0 435.2 837.5Q435.0 841.0 430.0 845.0" fill="none" stroke="#000" stroke-width="4.400"/><path d="M430.0 830.0Q435.0 834.0 435.2 837.5Q435.0 841.0 430.0 845.0" fill="none" stroke="#bebef0" stroke-width="2.400" stroke-linecap="square"/><circle cx="429.5" cy="837.2" r="3.900" fill="#bebef0" stroke="#000" stroke-width="1.100"/><path d="M542.0 830.0Q537.0 834.0 536.8 837.5Q537.0 841.0 542.0 845.0" fill="none" stroke="#000" stroke-width="4.400"/><path d="M542.0 830.0Q537.0 834.0 536.8 837.5Q537.0 841.0 542.0 845.0" fill="none" stroke="#bebef0" stroke-width="2.400" stroke-linecap="square"/><circle cx="542.5" cy="837.2" r="3.900" fill="#bebef0" stroke="#000" stroke-width="1.100"/><path d="M544.5 853.0V874.0M607.5 853.0V874.0" stroke="#c0c0c0" stroke-width="1.400"/><path d="M553 863.5H599.5" stroke="#bebef0" stroke-width="1"/><path d="M553 864.5H599.5" stroke="#222" stroke-width="1"/><path d="M545.0 856.0Q550.0 860.0 550.2 863.5Q550.0 867.0 545.0 871.0" fill="none" stroke="#000" stroke-width="4.400"/><path d="M545.0 856.0Q550.0 860.0 550.2 863.5Q550.0 867.0 545.0 871.0" fill="none" stroke="#bebef0" stroke-width="2.400" stroke-linecap="square"/><circle cx="544.5" cy="863.2" r="3.900" fill="#bebef0" stroke="#000" stroke-width="1.100"/><path d="M607.0 856.0Q602.0 860.0 601.8 863.5Q602.0 867.0 607.0 871.0" fill="none" stroke="#000" stroke-width="4.400"/><path d="M607.0 856.0Q602.0 860.0 601.8 863.5Q602.0 867.0 607.0 871.0" fill="none" stroke="#bebef0" stroke-width="2.400" stroke-linecap="square"/><circle cx="607.5" cy="863.2" r="3.900" fill="#bebef0" stroke="#000" stroke-width="1.100"/><path d="M609.5 827.0V848.0M655.5 827.0V848.0" stroke="#c0c0c0" stroke-width="1.400"/><path d="M618 837.5H647.5" stroke="#bebef0" stroke-width="1"/><path d="M618 838.5H647.5" stroke="#222" stroke-width="1"/><path d="M610.0 830.0Q615.0 834.0 615.2 837.5Q615.0 841.0 610.0 845.0" fill="none" stroke="#000" stroke-width="4.400"/><path d="M610.0 830.0Q615.0 834.0 615.2 837.5Q615.0 841.0 610.0 845.0" fill="none" stroke="#bebef0" stroke-width="2.400" stroke-linecap="square"/><circle cx="609.5" cy="837.2" r="3.900" fill="#bebef0" stroke="#000" stroke-width="1.100"/><path d="M655.0 830.0Q650.0 834.0 649.8 837.5Q650.0 841.0 655.0 845.0" fill="none" stroke="#000" stroke-width="4.400"/><path d="M655.0 830.0Q650.0 834.0 649.8 837.5Q650.0 841.0 655.0 845.0" fill="none" stroke="#bebef0" stroke-width="2.400" stroke-linecap="square"/><circle cx="655.5" cy="837.2" r="3.900" fill="#bebef0" stroke="#000" stroke-width="1.100"/><path d="M749.5 827.0V848.0M883.5 827.0V848.0" stroke="#c0c0c0" stroke-width="1.400"/><path d="M758 837.5H873" stroke="#bebef0" stroke-width="1"/><path d="M758 838.5H873" stroke="#222" stroke-width="1"/><path d="M750.0 830.0Q755.0 834.0 755.2 837.5Q755.0 841.0 750.0 845.0" fill="none" stroke="#000" stroke-width="4.400"/><path d="M750.0 830.0Q755.0 834.0 755.2 837.5Q755.0 841.0 750.0 845.0" fill="none" stroke="#bebef0" stroke-width="2.400" stroke-linecap="square"/><circle cx="749.5" cy="837.2" r="3.900" fill="#bebef0" stroke="#000" stroke-width="1.100"/><path d="M883.0 830.0Q878.0 834.0 877.8 837.5Q878.0 841.0 883.0 845.0" fill="none" stroke="#000" stroke-width="4.400"/><path d="M883.0 830.0Q878.0 834.0 877.8 837.5Q878.0 841.0 883.0 845.0" fill="none" stroke="#bebef0" stroke-width="2.400" stroke-linecap="square"/><circle cx="883.5" cy="837.2" r="3.900" fill="#bebef0" stroke="#000" stroke-width="1.100"/><path d="M923.5 827.0V848.0M1056.5 827.0V848.0" stroke="#c0c0c0" stroke-width="1.400"/><path d="M932 837.5H1047" stroke="#bebef0" stroke-width="1"/><path d="M932 838.5H1047" stroke="#222" stroke-width="1"/><path d="M924.0 830.0Q929.0 834.0 929.2 837.5Q929.0 841.0 924.0 845.0" fill="none" stroke="#000" stroke-width="4.400"/><path d="M924.0 830.0Q929.0 834.0 929.2 837.5Q929.0 841.0 924.0 845.0" fill="none" stroke="#bebef0" stroke-width="2.400" stroke-linecap="square"/><circle cx="923.5" cy="837.2" r="3.900" fill="#bebef0" stroke="#000" stroke-width="1.100"/><path d="M1056.0 830.0Q1051.0 834.0 1050.8 837.5Q1051.0 841.0 1056.0 845.0" fill="none" stroke="#000" stroke-width="4.400"/><path d="M1056.0 830.0Q1051.0 834.0 1050.8 837.5Q1051.0 841.0 1056.0 845.0" fill="none" stroke="#bebef0" stroke-width="2.400" stroke-linecap="square"/><circle cx="1056.5" cy="837.2" r="3.900" fill="#bebef0" stroke="#000" stroke-width="1.100"/><path d="M1064.5 827.0V848.0M1124.5 827.0V848.0" stroke="#c0c0c0" stroke-width="1.400"/><path d="M1073 837.5H1116.5" stroke="#bebef0" stroke-width="1"/><path d="M1073 838.5H1116.5" stroke="#222" stroke-width="1"/><path d="M1065.0 830.0Q1070.0 834.0 1070.2 837.5Q1070.0 841.0 1065.0 845.0" fill="none" stroke="#000" stroke-width="4.400"/><path d="M1065.0 830.0Q1070.0 834.0 1070.2 837.5Q1070.0 841.0 1065.0 845.0" fill="none" stroke="#bebef0" stroke-width="2.400" stroke-linecap="square"/><circle cx="1064.5" cy="837.2" r="3.900" fill="#bebef0" stroke="#000" stroke-width="1.100"/><path d="M1124.0 830.0Q1119.0 834.0 1118.8 837.5Q1119.0 841.0 1124.0 845.0" fill="none" stroke="#000" stroke-width="4.400"/><path d="M1124.0 830.0Q1119.0 834.0 1118.8 837.5Q1119.0 841.0 1124.0 845.0" fill="none" stroke="#bebef0" stroke-width="2.400" stroke-linecap="square"/><circle cx="1124.5" cy="837.2" r="3.900" fill="#bebef0" stroke="#000" stroke-width="1.100"/></svg><div class="lbl" style="left:145px;top:815px;width:155px">FriedOysterPoBoy</div><div class="lbl" style="left:275px;top:841px;width:155px">FriedOysterPoBoy</div><div class="lbl" style="left:437px;top:815px;width:134px">SheTouchedMe</div><div class="lbl" style="left:552px;top:841px;width:127px">RunLikeAClam</div><div class="lbl" style="left:617px;top:815px;width:106px">WaxyEsters</div><div class="lbl" style="left:757px;top:815px;width:116px">Predilections</div><div class="lbl" style="left:931px;top:815px;width:116px">Predilections</div><div class="lbl" style="left:1072px;top:815px;width:127px">RunLikeAClam</div><div class="a" style="left:1124px;top:812px;width:1px;height:99px;background:#1c1c1c"></div><div class="a" style="left:1124px;top:816px;width:1px;height:20px;background:#cfc88c"></div><div class="a" style="left:136px;top:939px;width:1024px;height:3px;background:#f07746"></div><div class="a" style="left:0;top:942px;width:1280px;height:56px;background:#dfdfdf"></div><div class="grab" style="left:1px;top:943px;height:54px"></div><div class="t sel" style="left:12px;top:948.500px">Project Rate (Hz):</div><div class="t sel" style="left:135px;top:948.500px">Snap To:</div><div class="t sel" style="left:222px;top:948.500px">Selection Start:</div><div class="t sel" style="left:398px;top:948.500px">End</div><div class="t sel" style="left:453px;top:948.500px">Length</div><div class="t sel" style="left:533px;top:948.500px">Audio Position:</div><div class="a" style="left:377px;top:947px;width:14px;height:14px;border-radius:50%;background:#fff;border:1px solid #a0a0a0"></div><div class="a" style="left:432px;top:947px;width:14px;height:14px;border-radius:50%;background:#f08c64;border:1px solid #c85a32"></div><div class="a" style="left:436px;top:951px;width:6px;height:6px;border-radius:50%;background:#5a3222"></div><div class="a" style="left:13px;top:969px;width:78px;height:27px;border:1px solid #b4b4b4;border-radius:4px;background:linear-gradient(#ececec,#dcdcdc)"></div><div class="a" style="left:14px;top:970px;width:50px;height:25px;background:#fff;border-right:1px solid #c0c0c0;border-radius:3px 0 0 3px"></div><div class="t" style="left:17px;top:976px;font-size:12.800px;color:#333">44100</div><svg class="a" style="left:72px;top:979px" width="10" height="8" viewBox="0 0 10 8"><path d="M1 1.500h8l-4 5z" fill="#666"/></svg><div class="a" style="left:128px;top:968px;width:1px;height:28px;background:#cfcfcf"></div><div class="combo" style="left:136px;top:969px;width:78px;height:27px;line-height:26px">Off</div><div class="a" style="left:195px;top:975.0px;width:1px;height:15px;background:#c4c4c4"></div><svg class="a" style="left:200px;top:976.0px" width="9" height="14" viewBox="0 0 9 14"><path d="M1.500 5l3-3.500 3 3.500zM1.500 9l3 3.500 3-3.500z" fill="#5a5a5a"/></svg><div class="a" style="left:222px;top:970px;width:146px;height:23px;background:#e0e0e0;border:1px solid #c6c6c6;border-top-color:#b8b8b8"></div><span class="dg" style="left:225.1px">0</span><span class="dg" style="left:235.2px">0</span><span class="un" style="left:245.3px">h</span><span class="dg" style="left:258px">3</span><span class="dg" style="left:268.1px">2</span><span class="un" style="left:280.1px">m</span><span class="dg" style="left:293.6px">2</span><span class="dg" style="left:303.8px">4</span><span class="dg" style="left:310.8px">.</span><span class="dg" style="left:317.1px">0</span><span class="dg" style="left:327.3px">9</span><span class="dg" style="left:337.2px">1</span><span class="un" style="left:346.9px">s</span><div class="a" style="left:357px;top:973px;width:9px;height:18px;background:#eee;border:1px solid #999;border-top-color:#fff;border-left-color:#fff"></div><svg class="a" style="left:357px;top:979px" width="9" height="6" viewBox="0 0 9 6"><path d="M1 1h7l-3.500 4z" fill="#000"/></svg><div class="a" style="left:374px;top:970px;width:146px;height:23px;background:#e0e0e0;border:1px solid #c6c6c6;border-top-color:#b8b8b8"></div><span class="dg" style="left:377.1px">0</span><span class="dg" style="left:387.2px">0</span><span class="un" style="left:397.3px">h</span><span class="dg" style="left:410px">0</span><span class="dg" style="left:420.1px">0</span><span class="un" style="left:432.1px">m</span><span class="dg" style="left:445.6px">0</span><span class="dg" style="left:455.8px">0</span><span class="dg" style="left:462.8px">.</span><span class="dg" style="left:469.1px">0</span><span class="dg" style="left:479.3px">0</span><span class="dg" style="left:489.2px">0</span><span class="un" style="left:498.9px">s</span><div class="a" style="left:509px;top:973px;width:9px;height:18px;background:#eee;border:1px solid #999;border-top-color:#fff;border-left-color:#fff"></div><svg class="a" style="left:509px;top:979px" width="9" height="6" viewBox="0 0 9 6"><path d="M1 1h7l-3.500 4z" fill="#000"/></svg><div class="a" style="left:533px;top:970px;width:146px;height:23px;background:#e0e0e0;border:1px solid #c6c6c6;border-top-color:#b8b8b8"></div><span class="dg" style="left:536.1px">0</span><span class="dg" style="left:546.2px">0</span><span class="un" style="left:556.3px">h</span><span class="dg" style="left:569px">0</span><span class="dg" style="left:579.1px">0</span><span class="un" style="left:591.1px">m</span><span class="dg" style="left:604.6px">0</span><span class="dg" style="left:614.8px">0</span><span class="dg" style="left:621.8px">.</span><span class="dg" style="left:628.1px">0</span><span class="dg" style="left:638.3px">0</span><span class="dg" style="left:648.2px">0</span><span class="un" style="left:657.9px">s</span><div class="a" style="left:668px;top:973px;width:9px;height:18px;background:#eee;border:1px solid #999;border-top-color:#fff;border-left-color:#fff"></div><svg class="a" style="left:668px;top:979px" width="9" height="6" viewBox="0 0 9 6"><path d="M1 1h7l-3.500 4z" fill="#000"/></svg><div class="a" style="left:527px;top:968px;width:1px;height:28px;background:#cfcfcf"></div><div class="a" style="left:0;top:998px;width:1280px;height:1px;background:#a0a0a0"></div><div class="a" style="left:0;top:999px;width:1280px;height:25px;background:#f1f0ef"></div><div class="a" style="left:2px;top:1001px;width:1101px;height:23px;border:1px solid #a8a8a8;border-right-color:#fff;border-bottom:none"></div><div class="a" style="left:1107px;top:1001px;width:171px;height:23px;border:1px solid #a8a8a8;border-right-color:#fff;border-bottom:none"></div><div class="t" style="left:1111px;top:1006.500px;font-size:13px;color:#3c3c3c">Actual Rate: 44100</div><svg class="a" style="left:1264px;top:1008px" width="14" height="14" viewBox="0 0 14 14"><path d="M12 2v1M9 5v1M12 5v1M6 8v1M9 8v1M12 8v1M3 11v1M6 11v1M9 11v1M12 11v1" stroke="#c4c2bd" stroke-width="1.500"/></svg></body></html>
